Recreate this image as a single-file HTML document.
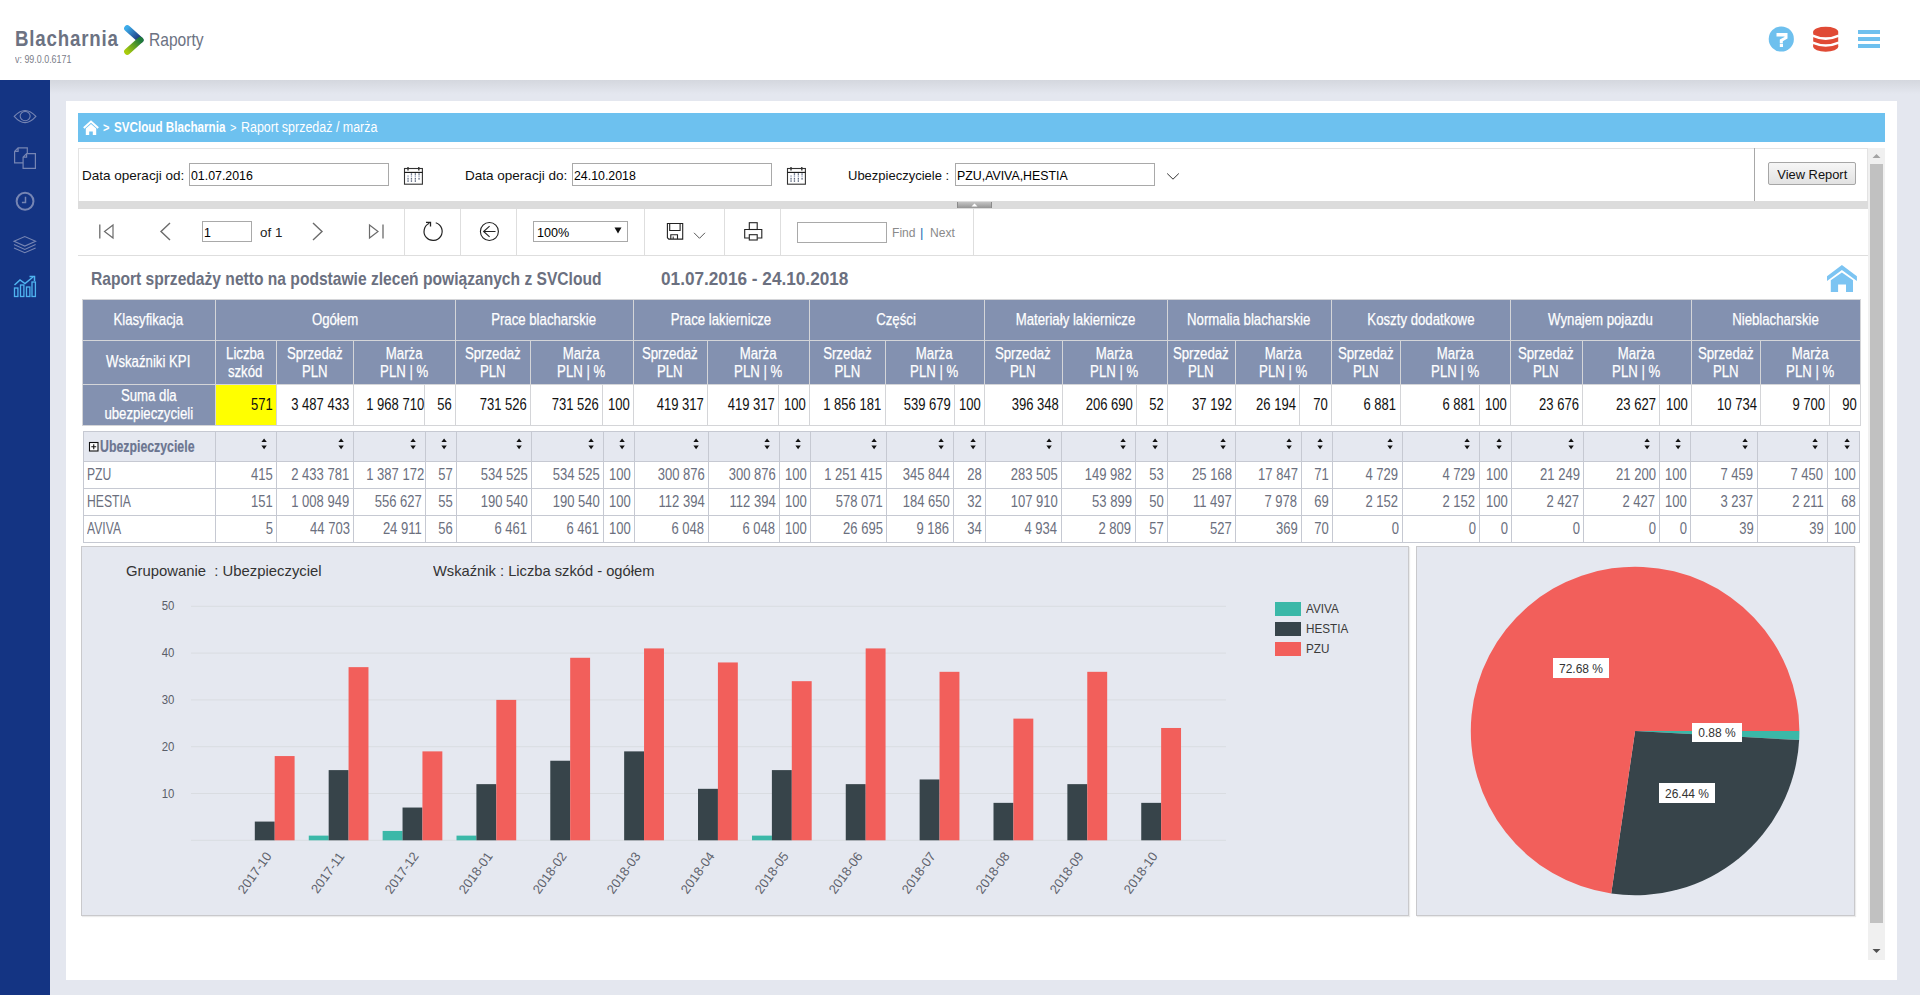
<!DOCTYPE html>
<html><head><meta charset="utf-8"><title>Raport</title>
<style>
html,body{margin:0;padding:0;}
body{width:1920px;height:995px;position:relative;overflow:hidden;background:#e4e7ef;font-family:"Liberation Sans", sans-serif;}
svg{overflow:visible}
</style></head><body>
<div style="position:absolute;left:0px;top:0px;width:1920px;height:80px;background:#fff"></div><div style="position:absolute;left:50px;top:80px;width:1870px;height:14px;background:linear-gradient(#d4d7de,#e4e7ef)"></div><div style="position:absolute;left:15px;top:26px;width:120px;height:26px;line-height:26px;font-size:22.5px;color:#6c7282;text-align:left;font-weight:bold;white-space:nowrap;letter-spacing:1.0px"><span style="display:inline-block;transform:scaleX(0.83);transform-origin:0% 50%;white-space:nowrap">Blacharnia</span></div><svg style="position:absolute;left:120px;top:22px;" width="28" height="36" viewBox="0 0 28 36"><defs><linearGradient id="lg1" gradientUnits="userSpaceOnUse" x1="7" y1="6" x2="20" y2="18"><stop offset="0" stop-color="#3cabe9"/><stop offset="1" stop-color="#1b2b72"/></linearGradient><linearGradient id="lg2" gradientUnits="userSpaceOnUse" x1="20" y1="18" x2="7" y2="30"><stop offset="0" stop-color="#1f7a3a"/><stop offset="1" stop-color="#a9cb0c"/></linearGradient></defs><path d="M7.3 6.4 L20.3 18" fill="none" stroke="url(#lg1)" stroke-width="6.3" stroke-linecap="round"/><path d="M20.3 18 L7.3 29.6" fill="none" stroke="url(#lg2)" stroke-width="6.3" stroke-linecap="round"/></svg><div style="position:absolute;left:149px;top:28px;width:60px;height:24px;line-height:24px;font-size:19px;color:#6c7282;text-align:left;font-weight:normal;white-space:nowrap;"><span style="display:inline-block;transform:scaleX(0.82);transform-origin:0% 50%;white-space:nowrap">Raporty</span></div><div style="position:absolute;left:15px;top:54px;width:70px;height:12px;line-height:12px;font-size:10px;color:#7a7d88;text-align:left;font-weight:normal;white-space:nowrap;"><span style="display:inline-block;transform:scaleX(0.89);transform-origin:0% 50%;white-space:nowrap">v: 99.0.0.6171</span></div><svg style="position:absolute;left:1768px;top:26px;" width="27" height="27" viewBox="0 0 27 27"><circle cx="13.3" cy="13" r="12.6" fill="#6ec0ee"/><path d="M8.5 7.1 L19.5 7.1 L19.5 12.5 L14.8 15.2 L14.8 17.2 L11.8 17.2 L11.8 13.6 L16.5 10.9 L16.5 10.5 L8.5 10.5 Z" fill="#fff"/><rect x="11.8" y="17.8" width="3.2" height="3.2" fill="#fff"/></svg><svg style="position:absolute;left:1812px;top:25px;" width="28" height="28" viewBox="0 0 28 28"><ellipse cx="13.7" cy="6.8" rx="12.5" ry="5.1" fill="#e04a35"/><rect x="1.2" y="6.8" width="25" height="14.8" fill="#e04a35"/><ellipse cx="13.7" cy="21.6" rx="12.5" ry="5.1" fill="#e04a35"/><path d="M0.5 10.6 Q13.7 16.6 26.9 10.6" fill="none" stroke="#fff" stroke-width="2.6"/><path d="M0.5 17.6 Q13.7 23.3 26.9 17.6" fill="none" stroke="#fff" stroke-width="2.4"/></svg><svg style="position:absolute;left:1858px;top:29px;" width="23" height="20" viewBox="0 0 23 20"><rect x="0" y="1" width="22" height="4" fill="#6ec0ee"/><rect x="0" y="8" width="22" height="4" fill="#6ec0ee"/><rect x="0" y="15" width="22" height="4" fill="#6ec0ee"/></svg><div style="position:absolute;left:0px;top:80px;width:50px;height:915px;background:#143483"></div><svg style="position:absolute;left:13px;top:109px;" width="25" height="16" viewBox="0 0 25 16"><path d="M1.2 7.4 Q12 -4.4 22.9 7.4 Q12 19.8 1.2 7.4 Z" fill="none" stroke="#7685b3" stroke-width="1.1"/><ellipse cx="12.15" cy="7.1" rx="5" ry="4.6" fill="none" stroke="#7685b3" stroke-width="1.1"/></svg><svg style="position:absolute;left:13px;top:146px;" width="25" height="25" viewBox="0 0 25 25"><path d="M1.6 5.3 L5.1 1.8 L14.3 1.8 L14.3 7.6 M1.6 5.3 L1.6 16.9 L10.1 16.9 M1.6 5.3 L5.1 5.3 L5.1 1.8" fill="none" stroke="#7685b3" stroke-width="1.2"/><path d="M10.1 11.1 L13.6 7.6 L22.4 7.6 L22.4 22.4 L10.1 22.4 Z M10.1 11.1 L13.6 11.1 L13.6 7.6" fill="none" stroke="#7685b3" stroke-width="1.2"/></svg><svg style="position:absolute;left:15px;top:191px;" width="21" height="21" viewBox="0 0 21 21"><circle cx="10.05" cy="10.25" r="8.4" fill="none" stroke="#7685b3" stroke-width="2"/><path d="M10.5 5.7 L10.5 11.4 L6.9 11.4" fill="none" stroke="#7685b3" stroke-width="1.5"/></svg><svg style="position:absolute;left:13px;top:235px;" width="25" height="20" viewBox="0 0 25 20"><path d="M1 6.3 L11.8 1.5 L22.6 6.3 L11.8 11.1 Z" fill="none" stroke="#7685b3" stroke-width="1.1"/><path d="M1 9.6 L11.8 14.4 L22.6 9.6" fill="none" stroke="#7685b3" stroke-width="1.1"/><path d="M1 12.9 L11.8 17.7 L22.6 12.9" fill="none" stroke="#7685b3" stroke-width="1.1"/></svg><svg style="position:absolute;left:13px;top:275px;" width="24" height="23" viewBox="0 0 24 23"><rect x="1.5" y="13" width="3.4" height="8.5" fill="none" stroke="#4fb4f0" stroke-width="1.3"/><rect x="7.5" y="10" width="3.4" height="11.5" fill="none" stroke="#4fb4f0" stroke-width="1.3"/><rect x="13.5" y="12" width="3.4" height="9.5" fill="none" stroke="#4fb4f0" stroke-width="1.3"/><rect x="19" y="7" width="3.4" height="14.5" fill="none" stroke="#4fb4f0" stroke-width="1.3"/><path d="M1.5 10 L7 5 L12 8.5 L20 2" fill="none" stroke="#4fb4f0" stroke-width="1.5"/><path d="M16.5 1.5 L21.5 1.5 L21.5 6" fill="none" stroke="#4fb4f0" stroke-width="1.5"/></svg><div style="position:absolute;left:66px;top:101px;width:1831px;height:879px;background:#fff"></div><div style="position:absolute;left:78px;top:113px;width:1807px;height:29px;background:#6dc1ef"></div><svg style="position:absolute;left:83px;top:120px;" width="16" height="16" viewBox="0 0 16 16"><path d="M0.8 8 L8 1.5 L15.2 8" fill="none" stroke="#fff" stroke-width="2"/><path d="M2.8 8.5 L8 4 L13.2 8.5 L13.2 15 L9.8 15 L9.8 11.5 L6.2 11.5 L6.2 15 L2.8 15 Z" fill="#fff"/></svg><div style="position:absolute;left:103px;top:113px;width:10px;height:29px;line-height:29px;font-size:13px;color:#fff;text-align:left;font-weight:bold;white-space:nowrap;"><span style="display:inline-block;transform:scaleX(0.85);transform-origin:0% 50%;white-space:nowrap">&gt;</span></div><div style="position:absolute;left:114px;top:113px;width:120px;height:29px;line-height:29px;font-size:14px;color:#fff;text-align:left;font-weight:bold;white-space:nowrap;"><span style="display:inline-block;transform:scaleX(0.833);transform-origin:0% 50%;white-space:nowrap">SVCloud Blacharnia</span></div><div style="position:absolute;left:230px;top:113px;width:10px;height:29px;line-height:29px;font-size:13px;color:#fff;text-align:left;font-weight:normal;white-space:nowrap;"><span style="display:inline-block;transform:scaleX(0.85);transform-origin:0% 50%;white-space:nowrap">&gt;</span></div><div style="position:absolute;left:241px;top:113px;width:150px;height:29px;line-height:29px;font-size:14px;color:#fff;text-align:left;font-weight:normal;white-space:nowrap;"><span style="display:inline-block;transform:scaleX(0.89);transform-origin:0% 50%;white-space:nowrap">Raport sprzedaż / marża</span></div><div style="position:absolute;left:78px;top:148px;width:1790px;height:53px;border:1px solid #e3e3e3;border-bottom:none;box-sizing:border-box;background:#fff"></div><div style="position:absolute;left:1754px;top:148px;width:1px;height:53px;background:#a8a8a8"></div><div style="position:absolute;left:82px;top:164px;width:110px;height:23px;line-height:23px;font-size:13px;color:#111;text-align:left;font-weight:normal;white-space:nowrap;"><span style="display:inline-block;transform:scaleX(1.04);transform-origin:0% 50%;white-space:nowrap">Data operacji od:</span></div><div style="position:absolute;left:189px;top:163px;width:200px;height:23px;border:1px solid #a9a9a9;box-sizing:border-box;background:#fff"></div><div style="position:absolute;left:191px;top:164px;width:196px;height:23px;line-height:23px;font-size:13px;color:#000;text-align:left;font-weight:normal;white-space:nowrap;"><span style="display:inline-block;transform:scaleX(0.95);transform-origin:0% 50%;white-space:nowrap">01.07.2016</span></div><svg style="position:absolute;left:403px;top:166px;" width="21" height="20" viewBox="0 0 21 20"><rect x="1.5" y="2.5" width="17.9" height="15.7" fill="none" stroke="#333" stroke-width="1.1"/><path d="M1.5 6.4 L19.4 6.4" stroke="#111" stroke-width="1.1"/><path d="M5 0.9 L5 4.4 M15.8 0.9 L15.8 4.4" stroke="#333" stroke-width="1.4"/><rect x="7.800000000000001" y="7.4" width="1.3" height="1.3" fill="#3c4a66"/><rect x="11.700000000000001" y="7.4" width="1.3" height="1.3" fill="#3c4a66"/><rect x="15.4" y="7.4" width="1.3" height="1.3" fill="#3c4a66"/><rect x="4.4" y="12.200000000000001" width="1.3" height="1.3" fill="#3c4a66"/><rect x="7.800000000000001" y="12.200000000000001" width="1.3" height="1.3" fill="#3c4a66"/><rect x="11.700000000000001" y="12.200000000000001" width="1.3" height="1.3" fill="#3c4a66"/><rect x="15.4" y="12.200000000000001" width="1.3" height="1.3" fill="#3c4a66"/><rect x="4.4" y="14.4" width="1.3" height="1.3" fill="#3c4a66"/><rect x="7.800000000000001" y="14.4" width="1.3" height="1.3" fill="#3c4a66"/><rect x="11.700000000000001" y="14.4" width="1.3" height="1.3" fill="#3c4a66"/><rect x="4.4" y="9.200000000000001" width="1.3" height="2.2" fill="#a8b0c4"/><rect x="7.800000000000001" y="9.200000000000001" width="1.3" height="2.2" fill="#a8b0c4"/><rect x="11.700000000000001" y="9.200000000000001" width="1.3" height="2.2" fill="#a8b0c4"/><rect x="15.4" y="9.200000000000001" width="1.3" height="2.2" fill="#a8b0c4"/></svg><div style="position:absolute;left:465px;top:164px;width:110px;height:23px;line-height:23px;font-size:13px;color:#111;text-align:left;font-weight:normal;white-space:nowrap;"><span style="display:inline-block;transform:scaleX(1.04);transform-origin:0% 50%;white-space:nowrap">Data operacji do:</span></div><div style="position:absolute;left:572px;top:163px;width:200px;height:23px;border:1px solid #a9a9a9;box-sizing:border-box;background:#fff"></div><div style="position:absolute;left:574px;top:164px;width:196px;height:23px;line-height:23px;font-size:13px;color:#000;text-align:left;font-weight:normal;white-space:nowrap;"><span style="display:inline-block;transform:scaleX(0.95);transform-origin:0% 50%;white-space:nowrap">24.10.2018</span></div><svg style="position:absolute;left:786px;top:166px;" width="21" height="20" viewBox="0 0 21 20"><rect x="1.5" y="2.5" width="17.9" height="15.7" fill="none" stroke="#333" stroke-width="1.1"/><path d="M1.5 6.4 L19.4 6.4" stroke="#111" stroke-width="1.1"/><path d="M5 0.9 L5 4.4 M15.8 0.9 L15.8 4.4" stroke="#333" stroke-width="1.4"/><rect x="7.800000000000001" y="7.4" width="1.3" height="1.3" fill="#3c4a66"/><rect x="11.700000000000001" y="7.4" width="1.3" height="1.3" fill="#3c4a66"/><rect x="15.4" y="7.4" width="1.3" height="1.3" fill="#3c4a66"/><rect x="4.4" y="12.200000000000001" width="1.3" height="1.3" fill="#3c4a66"/><rect x="7.800000000000001" y="12.200000000000001" width="1.3" height="1.3" fill="#3c4a66"/><rect x="11.700000000000001" y="12.200000000000001" width="1.3" height="1.3" fill="#3c4a66"/><rect x="15.4" y="12.200000000000001" width="1.3" height="1.3" fill="#3c4a66"/><rect x="4.4" y="14.4" width="1.3" height="1.3" fill="#3c4a66"/><rect x="7.800000000000001" y="14.4" width="1.3" height="1.3" fill="#3c4a66"/><rect x="11.700000000000001" y="14.4" width="1.3" height="1.3" fill="#3c4a66"/><rect x="4.4" y="9.200000000000001" width="1.3" height="2.2" fill="#a8b0c4"/><rect x="7.800000000000001" y="9.200000000000001" width="1.3" height="2.2" fill="#a8b0c4"/><rect x="11.700000000000001" y="9.200000000000001" width="1.3" height="2.2" fill="#a8b0c4"/><rect x="15.4" y="9.200000000000001" width="1.3" height="2.2" fill="#a8b0c4"/></svg><div style="position:absolute;left:848px;top:164px;width:110px;height:23px;line-height:23px;font-size:13px;color:#111;text-align:left;font-weight:normal;white-space:nowrap;">Ubezpieczyciele :</div><div style="position:absolute;left:955px;top:163px;width:200px;height:23px;border:1px solid #a9a9a9;box-sizing:border-box;background:#fff"></div><div style="position:absolute;left:957px;top:164px;width:196px;height:23px;line-height:23px;font-size:13px;color:#000;text-align:left;font-weight:normal;white-space:nowrap;"><span style="display:inline-block;transform:scaleX(0.95);transform-origin:0% 50%;white-space:nowrap">PZU,AVIVA,HESTIA</span></div><svg style="position:absolute;left:1166px;top:171px;" width="14" height="10" viewBox="0 0 14 10"><path d="M1.2 2.5 L7 8.2 L12.8 2.5" fill="none" stroke="#333" stroke-width="1"/></svg><div style="position:absolute;left:1768px;top:162px;width:88px;height:23px;border:1px solid #a6a6a6;box-sizing:border-box;background:linear-gradient(#f6f6f6,#e2e2e2);border-radius:2px"></div><div style="position:absolute;left:1768px;top:163px;width:88px;height:23px;line-height:23px;font-size:13px;color:#111;text-align:center;font-weight:normal;white-space:nowrap;"><span style="display:inline-block;transform:scaleX(0.99);transform-origin:50% 50%;white-space:nowrap">View Report</span></div><div style="position:absolute;left:78px;top:201px;width:1790px;height:8px;background:#dcdcdc"></div><div style="position:absolute;left:957px;top:202px;width:35px;height:6px;background:linear-gradient(#c4c4c4,#959595);border-left:1px solid #8a8a8a;border-right:1px solid #8a8a8a;box-sizing:border-box"></div><svg style="position:absolute;left:971px;top:202.5px;" width="7" height="4" viewBox="0 0 7 4"><path d="M0.5 3.5 L3.5 0.5 L6.5 3.5 Z" fill="#fff"/></svg><div style="position:absolute;left:78px;top:255px;width:1790px;height:1px;background:#dedede"></div><div style="position:absolute;left:404px;top:209px;width:1px;height:46px;background:#dedede"></div><div style="position:absolute;left:460px;top:209px;width:1px;height:46px;background:#dedede"></div><div style="position:absolute;left:516px;top:209px;width:1px;height:46px;background:#dedede"></div><div style="position:absolute;left:644px;top:209px;width:1px;height:46px;background:#dedede"></div><div style="position:absolute;left:724px;top:209px;width:1px;height:46px;background:#dedede"></div><div style="position:absolute;left:780px;top:209px;width:1px;height:46px;background:#dedede"></div><div style="position:absolute;left:973px;top:209px;width:1px;height:46px;background:#dedede"></div><svg style="position:absolute;left:98px;top:223px;" width="18" height="18" viewBox="0 0 18 18"><path d="M1.8 1.5 L1.8 15.5" stroke="#6b6b6b" stroke-width="1.3"/><path d="M15 2 L6.5 8.5 L15 15 Z" fill="none" stroke="#6b6b6b" stroke-width="1.2"/></svg><svg style="position:absolute;left:159px;top:222px;" width="14" height="20" viewBox="0 0 14 20"><path d="M11 1 L2 9.5 L11 18" fill="none" stroke="#6b6b6b" stroke-width="1.4"/></svg><div style="position:absolute;left:202px;top:221px;width:50px;height:21px;border:1px solid #a9a9a9;box-sizing:border-box;background:#fff"></div><div style="position:absolute;left:204px;top:222px;width:46px;height:21px;line-height:21px;font-size:13px;color:#000;text-align:left;font-weight:normal;white-space:nowrap;"><span style="display:inline-block;transform:scaleX(0.95);transform-origin:0% 50%;white-space:nowrap">1</span></div><div style="position:absolute;left:260px;top:222px;width:30px;height:21px;line-height:21px;font-size:13px;color:#222;text-align:left;font-weight:normal;white-space:nowrap;"><span style="display:inline-block;transform:scaleX(1.03);transform-origin:0% 50%;white-space:nowrap">of 1</span></div><svg style="position:absolute;left:311px;top:222px;" width="14" height="20" viewBox="0 0 14 20"><path d="M2 1 L11 9.5 L2 18" fill="none" stroke="#6b6b6b" stroke-width="1.4"/></svg><svg style="position:absolute;left:367px;top:223px;" width="18" height="18" viewBox="0 0 18 18"><path d="M16 1.5 L16 15.5" stroke="#6b6b6b" stroke-width="1.3"/><path d="M2.5 2 L11 8.5 L2.5 15 Z" fill="none" stroke="#6b6b6b" stroke-width="1.2"/></svg><svg style="position:absolute;left:422px;top:220px;" width="23" height="23" viewBox="0 0 23 23"><path d="M13.75 2.75 A9.05 9.05 0 1 1 7.28 3.2" fill="none" stroke="#222" stroke-width="1.2"/><path d="M4 2.3 L8.5 2.3 L8.5 6.5" fill="none" stroke="#222" stroke-width="1.3"/></svg><svg style="position:absolute;left:479px;top:221px;" width="22" height="22" viewBox="0 0 22 22"><circle cx="10.4" cy="10.45" r="9.0" fill="none" stroke="#222" stroke-width="1.1"/><path d="M10.6 5.1 L4.6 10.5 L10.6 15.9 M4.6 10.5 L16.5 10.5" fill="none" stroke="#222" stroke-width="1.1"/></svg><div style="position:absolute;left:533px;top:221px;width:95px;height:21px;border:1px solid #a9a9a9;box-sizing:border-box;background:#fff"></div><div style="position:absolute;left:537px;top:222px;width:60px;height:21px;line-height:21px;font-size:13px;color:#000;text-align:left;font-weight:normal;white-space:nowrap;"><span style="display:inline-block;transform:scaleX(0.97);transform-origin:0% 50%;white-space:nowrap">100%</span></div><svg style="position:absolute;left:614px;top:227px;" width="8" height="7" viewBox="0 0 8 7"><path d="M0.5 0.5 L7.5 0.5 L4 6.5 Z" fill="#111"/></svg><svg style="position:absolute;left:665px;top:222px;" width="20" height="19" viewBox="0 0 20 19"><path d="M2.4 1.5 L17.7 1.5 L17.7 17.1 L3.8 17.1 L2.4 15.7 Z" fill="none" stroke="#222" stroke-width="1.1"/><path d="M4.7 1.5 L4.7 8.5 L15.1 8.5 L15.1 1.5" fill="none" stroke="#222" stroke-width="1.1"/><path d="M5.8 17.1 L5.8 12.7 L12.5 12.7 L12.5 17.1" fill="none" stroke="#222" stroke-width="1.1"/><path d="M8.2 14.5 L8.2 17" stroke="#222" stroke-width="1"/></svg><svg style="position:absolute;left:693px;top:231px;" width="13" height="9" viewBox="0 0 13 9"><path d="M1 1.8 L6.5 7.3 L12 1.8" fill="none" stroke="#444" stroke-width="0.9"/></svg><svg style="position:absolute;left:743px;top:221px;" width="21" height="21" viewBox="0 0 21 21"><rect x="6.3" y="1.7" width="7.9" height="6.8" fill="none" stroke="#222" stroke-width="1.1"/><path d="M6.3 17 L1.7 17 L1.7 8.5 L18.8 8.5 L18.8 17 L14.2 17" fill="none" stroke="#222" stroke-width="1.1"/><rect x="6.3" y="13.7" width="7.9" height="5.3" fill="#fff" stroke="#222" stroke-width="1.1"/></svg><div style="position:absolute;left:797px;top:222px;width:90px;height:21px;border:1px solid #a9a9a9;box-sizing:border-box;background:#fff"></div><div style="position:absolute;left:892px;top:222px;width:30px;height:21px;line-height:21px;font-size:13px;color:#8a8a8a;text-align:left;font-weight:normal;white-space:nowrap;"><span style="display:inline-block;transform:scaleX(0.93);transform-origin:0% 50%;white-space:nowrap">Find</span></div><div style="position:absolute;left:920px;top:222px;width:6px;height:21px;line-height:21px;font-size:13px;color:#1a6fb5;text-align:left;font-weight:normal;white-space:nowrap;">|</div><div style="position:absolute;left:930px;top:222px;width:30px;height:21px;line-height:21px;font-size:13px;color:#8a8a8a;text-align:left;font-weight:normal;white-space:nowrap;"><span style="display:inline-block;transform:scaleX(0.93);transform-origin:0% 50%;white-space:nowrap">Next</span></div><div style="position:absolute;left:1868px;top:148px;width:17px;height:812px;background:#f0f0f0"></div><div style="position:absolute;left:1870px;top:164px;width:13px;height:759px;background:#c1c1c1"></div><svg style="position:absolute;left:1872px;top:153px;" width="9" height="6" viewBox="0 0 9 6"><path d="M0.5 5 L4.5 1 L8.5 5 Z" fill="#a3a3a3"/></svg><svg style="position:absolute;left:1872px;top:948px;" width="9" height="6" viewBox="0 0 9 6"><path d="M0.5 1 L4.5 5 L8.5 1 Z" fill="#505050"/></svg><div style="position:absolute;left:91px;top:267px;width:520px;height:24px;line-height:24px;font-size:19px;color:#6b7080;text-align:left;font-weight:bold;white-space:nowrap;"><span style="display:inline-block;transform:scaleX(0.821);transform-origin:0% 50%;white-space:nowrap">Raport sprzedaży netto na podstawie zleceń powiązanych z SVCloud</span></div><div style="position:absolute;left:661px;top:267px;width:200px;height:24px;line-height:24px;font-size:19px;color:#6b7080;text-align:left;font-weight:bold;white-space:nowrap;"><span style="display:inline-block;transform:scaleX(0.905);transform-origin:0% 50%;white-space:nowrap">01.07.2016 - 24.10.2018</span></div><svg style="position:absolute;left:1825px;top:263px;" width="34" height="31" viewBox="0 0 34 31"><path d="M2 13.3 L16.9 2 L31.9 13.3 L31.9 18 L16.9 6.9 L2 18 Z" fill="#7cc4f2"/><path d="M5.8 17.3 L16.9 9.4 L28 17.3 L28 28.9 L21 28.9 L21 21.6 L13.1 21.6 L13.1 28.9 L5.8 28.9 Z" fill="#7cc4f2"/></svg><div style="position:absolute;left:82px;top:299px;width:1779px;height:85px;background:#8391b0"></div><div style="position:absolute;left:82px;top:384px;width:133px;height:41px;background:#8391b0"></div><div style="position:absolute;left:215px;top:384px;width:61px;height:41px;background:#ffff00"></div><div style="position:absolute;left:276px;top:384px;width:1584px;height:41px;background:#fff"></div><div style="position:absolute;left:82px;top:299px;width:1779px;height:127px;border:1px solid #d4d5d8;box-sizing:border-box"></div><div style="position:absolute;left:82px;top:340px;width:1778px;height:1px;background:#d4d5d8"></div><div style="position:absolute;left:82px;top:384px;width:1778px;height:1px;background:#d4d5d8"></div><div style="position:absolute;left:215px;top:299px;width:1px;height:126px;background:#d4d5d8"></div><div style="position:absolute;left:455px;top:299px;width:1px;height:126px;background:#d4d5d8"></div><div style="position:absolute;left:633px;top:299px;width:1px;height:126px;background:#d4d5d8"></div><div style="position:absolute;left:809px;top:299px;width:1px;height:126px;background:#d4d5d8"></div><div style="position:absolute;left:984px;top:299px;width:1px;height:126px;background:#d4d5d8"></div><div style="position:absolute;left:1167px;top:299px;width:1px;height:126px;background:#d4d5d8"></div><div style="position:absolute;left:1331px;top:299px;width:1px;height:126px;background:#d4d5d8"></div><div style="position:absolute;left:1510px;top:299px;width:1px;height:126px;background:#d4d5d8"></div><div style="position:absolute;left:1691px;top:299px;width:1px;height:126px;background:#d4d5d8"></div><div style="position:absolute;left:276px;top:340px;width:1px;height:85px;background:#d4d5d8"></div><div style="position:absolute;left:353px;top:340px;width:1px;height:85px;background:#d4d5d8"></div><div style="position:absolute;left:530px;top:340px;width:1px;height:85px;background:#d4d5d8"></div><div style="position:absolute;left:707px;top:340px;width:1px;height:85px;background:#d4d5d8"></div><div style="position:absolute;left:885px;top:340px;width:1px;height:85px;background:#d4d5d8"></div><div style="position:absolute;left:1062px;top:340px;width:1px;height:85px;background:#d4d5d8"></div><div style="position:absolute;left:1235px;top:340px;width:1px;height:85px;background:#d4d5d8"></div><div style="position:absolute;left:1400px;top:340px;width:1px;height:85px;background:#d4d5d8"></div><div style="position:absolute;left:1582px;top:340px;width:1px;height:85px;background:#d4d5d8"></div><div style="position:absolute;left:1760px;top:340px;width:1px;height:85px;background:#d4d5d8"></div><div style="position:absolute;left:424px;top:384px;width:1px;height:41px;background:#d4d5d8"></div><div style="position:absolute;left:602px;top:384px;width:1px;height:41px;background:#d4d5d8"></div><div style="position:absolute;left:778px;top:384px;width:1px;height:41px;background:#d4d5d8"></div><div style="position:absolute;left:954px;top:384px;width:1px;height:41px;background:#d4d5d8"></div><div style="position:absolute;left:1136px;top:384px;width:1px;height:41px;background:#d4d5d8"></div><div style="position:absolute;left:1299px;top:384px;width:1px;height:41px;background:#d4d5d8"></div><div style="position:absolute;left:1479px;top:384px;width:1px;height:41px;background:#d4d5d8"></div><div style="position:absolute;left:1659px;top:384px;width:1px;height:41px;background:#d4d5d8"></div><div style="position:absolute;left:1829px;top:384px;width:1px;height:41px;background:#d4d5d8"></div><div style="position:absolute;left:82px;top:299px;width:133px;height:41px;line-height:41px;font-size:16px;color:#fff;text-align:center;font-weight:normal;white-space:nowrap;-webkit-text-stroke:0.25px #fff"><span style="display:inline-block;transform:scaleX(0.825);transform-origin:50% 50%;white-space:nowrap">Klasyfikacja</span></div><div style="position:absolute;left:215px;top:299px;width:240px;height:41px;line-height:41px;font-size:16px;color:#fff;text-align:center;font-weight:normal;white-space:nowrap;-webkit-text-stroke:0.25px #fff"><span style="display:inline-block;transform:scaleX(0.825);transform-origin:50% 50%;white-space:nowrap">Ogółem</span></div><div style="position:absolute;left:455px;top:299px;width:178px;height:41px;line-height:41px;font-size:16px;color:#fff;text-align:center;font-weight:normal;white-space:nowrap;-webkit-text-stroke:0.25px #fff"><span style="display:inline-block;transform:scaleX(0.825);transform-origin:50% 50%;white-space:nowrap">Prace blacharskie</span></div><div style="position:absolute;left:633px;top:299px;width:176px;height:41px;line-height:41px;font-size:16px;color:#fff;text-align:center;font-weight:normal;white-space:nowrap;-webkit-text-stroke:0.25px #fff"><span style="display:inline-block;transform:scaleX(0.825);transform-origin:50% 50%;white-space:nowrap">Prace lakiernicze</span></div><div style="position:absolute;left:809px;top:299px;width:175px;height:41px;line-height:41px;font-size:16px;color:#fff;text-align:center;font-weight:normal;white-space:nowrap;-webkit-text-stroke:0.25px #fff"><span style="display:inline-block;transform:scaleX(0.825);transform-origin:50% 50%;white-space:nowrap">Części</span></div><div style="position:absolute;left:984px;top:299px;width:183px;height:41px;line-height:41px;font-size:16px;color:#fff;text-align:center;font-weight:normal;white-space:nowrap;-webkit-text-stroke:0.25px #fff"><span style="display:inline-block;transform:scaleX(0.825);transform-origin:50% 50%;white-space:nowrap">Materiały lakiernicze</span></div><div style="position:absolute;left:1167px;top:299px;width:164px;height:41px;line-height:41px;font-size:16px;color:#fff;text-align:center;font-weight:normal;white-space:nowrap;-webkit-text-stroke:0.25px #fff"><span style="display:inline-block;transform:scaleX(0.825);transform-origin:50% 50%;white-space:nowrap">Normalia blacharskie</span></div><div style="position:absolute;left:1331px;top:299px;width:179px;height:41px;line-height:41px;font-size:16px;color:#fff;text-align:center;font-weight:normal;white-space:nowrap;-webkit-text-stroke:0.25px #fff"><span style="display:inline-block;transform:scaleX(0.825);transform-origin:50% 50%;white-space:nowrap">Koszty dodatkowe</span></div><div style="position:absolute;left:1510px;top:299px;width:181px;height:41px;line-height:41px;font-size:16px;color:#fff;text-align:center;font-weight:normal;white-space:nowrap;-webkit-text-stroke:0.25px #fff"><span style="display:inline-block;transform:scaleX(0.825);transform-origin:50% 50%;white-space:nowrap">Wynajem pojazdu</span></div><div style="position:absolute;left:1691px;top:299px;width:169px;height:41px;line-height:41px;font-size:16px;color:#fff;text-align:center;font-weight:normal;white-space:nowrap;-webkit-text-stroke:0.25px #fff"><span style="display:inline-block;transform:scaleX(0.825);transform-origin:50% 50%;white-space:nowrap">Nieblacharskie</span></div><div style="position:absolute;left:82px;top:340px;width:133px;height:44px;line-height:44px;font-size:16px;color:#fff;text-align:center;font-weight:normal;white-space:nowrap;-webkit-text-stroke:0.25px #fff"><span style="display:inline-block;transform:scaleX(0.825);transform-origin:50% 50%;white-space:nowrap">Wskaźniki KPI</span></div><div style="position:absolute;left:215px;top:344.5px;width:61px;height:36px;line-height:18px;-webkit-text-stroke:0.25px #fff;font-size:16px;color:#fff;text-align:center;white-space:nowrap"><span style="display:inline-block;transform:scaleX(0.825);transform-origin:50% 50%">Liczba<br>szkód</span></div><div style="position:absolute;left:276px;top:344.5px;width:77px;height:36px;line-height:18px;-webkit-text-stroke:0.25px #fff;font-size:16px;color:#fff;text-align:center;white-space:nowrap"><span style="display:inline-block;transform:scaleX(0.825);transform-origin:50% 50%">Sprzedaż<br>PLN</span></div><div style="position:absolute;left:353px;top:344.5px;width:102px;height:36px;line-height:18px;-webkit-text-stroke:0.25px #fff;font-size:16px;color:#fff;text-align:center;white-space:nowrap"><span style="display:inline-block;transform:scaleX(0.825);transform-origin:50% 50%">Marża<br>PLN | %</span></div><div style="position:absolute;left:455px;top:344.5px;width:75px;height:36px;line-height:18px;-webkit-text-stroke:0.25px #fff;font-size:16px;color:#fff;text-align:center;white-space:nowrap"><span style="display:inline-block;transform:scaleX(0.825);transform-origin:50% 50%">Sprzedaż<br>PLN</span></div><div style="position:absolute;left:530px;top:344.5px;width:103px;height:36px;line-height:18px;-webkit-text-stroke:0.25px #fff;font-size:16px;color:#fff;text-align:center;white-space:nowrap"><span style="display:inline-block;transform:scaleX(0.825);transform-origin:50% 50%">Marża<br>PLN | %</span></div><div style="position:absolute;left:633px;top:344.5px;width:74px;height:36px;line-height:18px;-webkit-text-stroke:0.25px #fff;font-size:16px;color:#fff;text-align:center;white-space:nowrap"><span style="display:inline-block;transform:scaleX(0.825);transform-origin:50% 50%">Sprzedaż<br>PLN</span></div><div style="position:absolute;left:707px;top:344.5px;width:102px;height:36px;line-height:18px;-webkit-text-stroke:0.25px #fff;font-size:16px;color:#fff;text-align:center;white-space:nowrap"><span style="display:inline-block;transform:scaleX(0.825);transform-origin:50% 50%">Marża<br>PLN | %</span></div><div style="position:absolute;left:809px;top:344.5px;width:76px;height:36px;line-height:18px;-webkit-text-stroke:0.25px #fff;font-size:16px;color:#fff;text-align:center;white-space:nowrap"><span style="display:inline-block;transform:scaleX(0.825);transform-origin:50% 50%">Srzedaż<br>PLN</span></div><div style="position:absolute;left:885px;top:344.5px;width:99px;height:36px;line-height:18px;-webkit-text-stroke:0.25px #fff;font-size:16px;color:#fff;text-align:center;white-space:nowrap"><span style="display:inline-block;transform:scaleX(0.825);transform-origin:50% 50%">Marża<br>PLN | %</span></div><div style="position:absolute;left:984px;top:344.5px;width:78px;height:36px;line-height:18px;-webkit-text-stroke:0.25px #fff;font-size:16px;color:#fff;text-align:center;white-space:nowrap"><span style="display:inline-block;transform:scaleX(0.825);transform-origin:50% 50%">Sprzedaż<br>PLN</span></div><div style="position:absolute;left:1062px;top:344.5px;width:105px;height:36px;line-height:18px;-webkit-text-stroke:0.25px #fff;font-size:16px;color:#fff;text-align:center;white-space:nowrap"><span style="display:inline-block;transform:scaleX(0.825);transform-origin:50% 50%">Marża<br>PLN | %</span></div><div style="position:absolute;left:1167px;top:344.5px;width:68px;height:36px;line-height:18px;-webkit-text-stroke:0.25px #fff;font-size:16px;color:#fff;text-align:center;white-space:nowrap"><span style="display:inline-block;transform:scaleX(0.825);transform-origin:50% 50%">Sprzedaż<br>PLN</span></div><div style="position:absolute;left:1235px;top:344.5px;width:96px;height:36px;line-height:18px;-webkit-text-stroke:0.25px #fff;font-size:16px;color:#fff;text-align:center;white-space:nowrap"><span style="display:inline-block;transform:scaleX(0.825);transform-origin:50% 50%">Marża<br>PLN | %</span></div><div style="position:absolute;left:1331px;top:344.5px;width:69px;height:36px;line-height:18px;-webkit-text-stroke:0.25px #fff;font-size:16px;color:#fff;text-align:center;white-space:nowrap"><span style="display:inline-block;transform:scaleX(0.825);transform-origin:50% 50%">Sprzedaż<br>PLN</span></div><div style="position:absolute;left:1400px;top:344.5px;width:110px;height:36px;line-height:18px;-webkit-text-stroke:0.25px #fff;font-size:16px;color:#fff;text-align:center;white-space:nowrap"><span style="display:inline-block;transform:scaleX(0.825);transform-origin:50% 50%">Marża<br>PLN | %</span></div><div style="position:absolute;left:1510px;top:344.5px;width:72px;height:36px;line-height:18px;-webkit-text-stroke:0.25px #fff;font-size:16px;color:#fff;text-align:center;white-space:nowrap"><span style="display:inline-block;transform:scaleX(0.825);transform-origin:50% 50%">Sprzedaż<br>PLN</span></div><div style="position:absolute;left:1582px;top:344.5px;width:109px;height:36px;line-height:18px;-webkit-text-stroke:0.25px #fff;font-size:16px;color:#fff;text-align:center;white-space:nowrap"><span style="display:inline-block;transform:scaleX(0.825);transform-origin:50% 50%">Marża<br>PLN | %</span></div><div style="position:absolute;left:1691px;top:344.5px;width:69px;height:36px;line-height:18px;-webkit-text-stroke:0.25px #fff;font-size:16px;color:#fff;text-align:center;white-space:nowrap"><span style="display:inline-block;transform:scaleX(0.825);transform-origin:50% 50%">Sprzedaż<br>PLN</span></div><div style="position:absolute;left:1760px;top:344.5px;width:100px;height:36px;line-height:18px;-webkit-text-stroke:0.25px #fff;font-size:16px;color:#fff;text-align:center;white-space:nowrap"><span style="display:inline-block;transform:scaleX(0.825);transform-origin:50% 50%">Marża<br>PLN | %</span></div><div style="position:absolute;left:82px;top:387px;width:133px;height:36px;line-height:18px;-webkit-text-stroke:0.25px #fff;font-size:16px;color:#fff;text-align:center;white-space:nowrap"><span style="display:inline-block;transform:scaleX(0.825);transform-origin:50% 50%">Suma dla<br>ubezpieczycieli</span></div><div style="position:absolute;left:215px;top:384px;width:57.5px;height:42px;line-height:42px;font-size:16px;color:#111;text-align:right;font-weight:normal;white-space:nowrap;"><span style="display:inline-block;transform:scaleX(0.814);transform-origin:100% 50%;white-space:nowrap">571</span></div><div style="position:absolute;left:276px;top:384px;width:73.5px;height:42px;line-height:42px;font-size:16px;color:#111;text-align:right;font-weight:normal;white-space:nowrap;"><span style="display:inline-block;transform:scaleX(0.814);transform-origin:100% 50%;white-space:nowrap">3 487 433</span></div><div style="position:absolute;left:353px;top:384px;width:67.5px;height:42px;line-height:42px;font-size:16px;color:#111;text-align:right;font-weight:normal;white-space:nowrap;"><span style="display:inline-block;transform:scaleX(0.814);transform-origin:100% 50%;white-space:nowrap">1 968 710</span></div><div style="position:absolute;left:424px;top:384px;width:27.5px;height:42px;line-height:42px;font-size:16px;color:#111;text-align:right;font-weight:normal;white-space:nowrap;"><span style="display:inline-block;transform:scaleX(0.814);transform-origin:100% 50%;white-space:nowrap">56</span></div><div style="position:absolute;left:455px;top:384px;width:71.5px;height:42px;line-height:42px;font-size:16px;color:#111;text-align:right;font-weight:normal;white-space:nowrap;"><span style="display:inline-block;transform:scaleX(0.814);transform-origin:100% 50%;white-space:nowrap">731 526</span></div><div style="position:absolute;left:530px;top:384px;width:68.5px;height:42px;line-height:42px;font-size:16px;color:#111;text-align:right;font-weight:normal;white-space:nowrap;"><span style="display:inline-block;transform:scaleX(0.814);transform-origin:100% 50%;white-space:nowrap">731 526</span></div><div style="position:absolute;left:602px;top:384px;width:27.5px;height:42px;line-height:42px;font-size:16px;color:#111;text-align:right;font-weight:normal;white-space:nowrap;"><span style="display:inline-block;transform:scaleX(0.814);transform-origin:100% 50%;white-space:nowrap">100</span></div><div style="position:absolute;left:633px;top:384px;width:70.5px;height:42px;line-height:42px;font-size:16px;color:#111;text-align:right;font-weight:normal;white-space:nowrap;"><span style="display:inline-block;transform:scaleX(0.814);transform-origin:100% 50%;white-space:nowrap">419 317</span></div><div style="position:absolute;left:707px;top:384px;width:67.5px;height:42px;line-height:42px;font-size:16px;color:#111;text-align:right;font-weight:normal;white-space:nowrap;"><span style="display:inline-block;transform:scaleX(0.814);transform-origin:100% 50%;white-space:nowrap">419 317</span></div><div style="position:absolute;left:778px;top:384px;width:27.5px;height:42px;line-height:42px;font-size:16px;color:#111;text-align:right;font-weight:normal;white-space:nowrap;"><span style="display:inline-block;transform:scaleX(0.814);transform-origin:100% 50%;white-space:nowrap">100</span></div><div style="position:absolute;left:809px;top:384px;width:72.5px;height:42px;line-height:42px;font-size:16px;color:#111;text-align:right;font-weight:normal;white-space:nowrap;"><span style="display:inline-block;transform:scaleX(0.814);transform-origin:100% 50%;white-space:nowrap">1 856 181</span></div><div style="position:absolute;left:885px;top:384px;width:65.5px;height:42px;line-height:42px;font-size:16px;color:#111;text-align:right;font-weight:normal;white-space:nowrap;"><span style="display:inline-block;transform:scaleX(0.814);transform-origin:100% 50%;white-space:nowrap">539 679</span></div><div style="position:absolute;left:954px;top:384px;width:26.5px;height:42px;line-height:42px;font-size:16px;color:#111;text-align:right;font-weight:normal;white-space:nowrap;"><span style="display:inline-block;transform:scaleX(0.814);transform-origin:100% 50%;white-space:nowrap">100</span></div><div style="position:absolute;left:984px;top:384px;width:74.5px;height:42px;line-height:42px;font-size:16px;color:#111;text-align:right;font-weight:normal;white-space:nowrap;"><span style="display:inline-block;transform:scaleX(0.814);transform-origin:100% 50%;white-space:nowrap">396 348</span></div><div style="position:absolute;left:1062px;top:384px;width:70.5px;height:42px;line-height:42px;font-size:16px;color:#111;text-align:right;font-weight:normal;white-space:nowrap;"><span style="display:inline-block;transform:scaleX(0.814);transform-origin:100% 50%;white-space:nowrap">206 690</span></div><div style="position:absolute;left:1136px;top:384px;width:27.5px;height:42px;line-height:42px;font-size:16px;color:#111;text-align:right;font-weight:normal;white-space:nowrap;"><span style="display:inline-block;transform:scaleX(0.814);transform-origin:100% 50%;white-space:nowrap">52</span></div><div style="position:absolute;left:1167px;top:384px;width:64.5px;height:42px;line-height:42px;font-size:16px;color:#111;text-align:right;font-weight:normal;white-space:nowrap;"><span style="display:inline-block;transform:scaleX(0.814);transform-origin:100% 50%;white-space:nowrap">37 192</span></div><div style="position:absolute;left:1235px;top:384px;width:60.5px;height:42px;line-height:42px;font-size:16px;color:#111;text-align:right;font-weight:normal;white-space:nowrap;"><span style="display:inline-block;transform:scaleX(0.814);transform-origin:100% 50%;white-space:nowrap">26 194</span></div><div style="position:absolute;left:1299px;top:384px;width:28.5px;height:42px;line-height:42px;font-size:16px;color:#111;text-align:right;font-weight:normal;white-space:nowrap;"><span style="display:inline-block;transform:scaleX(0.814);transform-origin:100% 50%;white-space:nowrap">70</span></div><div style="position:absolute;left:1331px;top:384px;width:65.5px;height:42px;line-height:42px;font-size:16px;color:#111;text-align:right;font-weight:normal;white-space:nowrap;"><span style="display:inline-block;transform:scaleX(0.814);transform-origin:100% 50%;white-space:nowrap">6 881</span></div><div style="position:absolute;left:1400px;top:384px;width:75.5px;height:42px;line-height:42px;font-size:16px;color:#111;text-align:right;font-weight:normal;white-space:nowrap;"><span style="display:inline-block;transform:scaleX(0.814);transform-origin:100% 50%;white-space:nowrap">6 881</span></div><div style="position:absolute;left:1479px;top:384px;width:27.5px;height:42px;line-height:42px;font-size:16px;color:#111;text-align:right;font-weight:normal;white-space:nowrap;"><span style="display:inline-block;transform:scaleX(0.814);transform-origin:100% 50%;white-space:nowrap">100</span></div><div style="position:absolute;left:1510px;top:384px;width:68.5px;height:42px;line-height:42px;font-size:16px;color:#111;text-align:right;font-weight:normal;white-space:nowrap;"><span style="display:inline-block;transform:scaleX(0.814);transform-origin:100% 50%;white-space:nowrap">23 676</span></div><div style="position:absolute;left:1582px;top:384px;width:73.5px;height:42px;line-height:42px;font-size:16px;color:#111;text-align:right;font-weight:normal;white-space:nowrap;"><span style="display:inline-block;transform:scaleX(0.814);transform-origin:100% 50%;white-space:nowrap">23 627</span></div><div style="position:absolute;left:1659px;top:384px;width:28.5px;height:42px;line-height:42px;font-size:16px;color:#111;text-align:right;font-weight:normal;white-space:nowrap;"><span style="display:inline-block;transform:scaleX(0.814);transform-origin:100% 50%;white-space:nowrap">100</span></div><div style="position:absolute;left:1691px;top:384px;width:65.5px;height:42px;line-height:42px;font-size:16px;color:#111;text-align:right;font-weight:normal;white-space:nowrap;"><span style="display:inline-block;transform:scaleX(0.814);transform-origin:100% 50%;white-space:nowrap">10 734</span></div><div style="position:absolute;left:1760px;top:384px;width:65.5px;height:42px;line-height:42px;font-size:16px;color:#111;text-align:right;font-weight:normal;white-space:nowrap;"><span style="display:inline-block;transform:scaleX(0.814);transform-origin:100% 50%;white-space:nowrap">9 700</span></div><div style="position:absolute;left:1829px;top:384px;width:27.5px;height:42px;line-height:42px;font-size:16px;color:#111;text-align:right;font-weight:normal;white-space:nowrap;"><span style="display:inline-block;transform:scaleX(0.814);transform-origin:100% 50%;white-space:nowrap">90</span></div><div style="position:absolute;left:83px;top:431px;width:1777px;height:30px;background:#e5e8f0"></div><div style="position:absolute;left:83px;top:461px;width:1777px;height:81px;background:#fff"></div><div style="position:absolute;left:83px;top:431px;width:1777px;height:112px;border:1px solid #c6c9d2;box-sizing:border-box"></div><div style="position:absolute;left:83px;top:461px;width:1776px;height:1px;background:#c6c9d2"></div><div style="position:absolute;left:83px;top:488px;width:1776px;height:1px;background:#c6c9d2"></div><div style="position:absolute;left:83px;top:515px;width:1776px;height:1px;background:#c6c9d2"></div><div style="position:absolute;left:215px;top:431px;width:1px;height:111px;background:#c6c9d2"></div><div style="position:absolute;left:276px;top:431px;width:1px;height:111px;background:#c6c9d2"></div><div style="position:absolute;left:353px;top:431px;width:1px;height:111px;background:#c6c9d2"></div><div style="position:absolute;left:425px;top:431px;width:1px;height:111px;background:#c6c9d2"></div><div style="position:absolute;left:456px;top:431px;width:1px;height:111px;background:#c6c9d2"></div><div style="position:absolute;left:531px;top:431px;width:1px;height:111px;background:#c6c9d2"></div><div style="position:absolute;left:603px;top:431px;width:1px;height:111px;background:#c6c9d2"></div><div style="position:absolute;left:634px;top:431px;width:1px;height:111px;background:#c6c9d2"></div><div style="position:absolute;left:708px;top:431px;width:1px;height:111px;background:#c6c9d2"></div><div style="position:absolute;left:779px;top:431px;width:1px;height:111px;background:#c6c9d2"></div><div style="position:absolute;left:810px;top:431px;width:1px;height:111px;background:#c6c9d2"></div><div style="position:absolute;left:886px;top:431px;width:1px;height:111px;background:#c6c9d2"></div><div style="position:absolute;left:953px;top:431px;width:1px;height:111px;background:#c6c9d2"></div><div style="position:absolute;left:985px;top:431px;width:1px;height:111px;background:#c6c9d2"></div><div style="position:absolute;left:1061px;top:431px;width:1px;height:111px;background:#c6c9d2"></div><div style="position:absolute;left:1135px;top:431px;width:1px;height:111px;background:#c6c9d2"></div><div style="position:absolute;left:1167px;top:431px;width:1px;height:111px;background:#c6c9d2"></div><div style="position:absolute;left:1235px;top:431px;width:1px;height:111px;background:#c6c9d2"></div><div style="position:absolute;left:1301px;top:431px;width:1px;height:111px;background:#c6c9d2"></div><div style="position:absolute;left:1332px;top:431px;width:1px;height:111px;background:#c6c9d2"></div><div style="position:absolute;left:1402px;top:431px;width:1px;height:111px;background:#c6c9d2"></div><div style="position:absolute;left:1479px;top:431px;width:1px;height:111px;background:#c6c9d2"></div><div style="position:absolute;left:1511px;top:431px;width:1px;height:111px;background:#c6c9d2"></div><div style="position:absolute;left:1583px;top:431px;width:1px;height:111px;background:#c6c9d2"></div><div style="position:absolute;left:1659px;top:431px;width:1px;height:111px;background:#c6c9d2"></div><div style="position:absolute;left:1690px;top:431px;width:1px;height:111px;background:#c6c9d2"></div><div style="position:absolute;left:1757px;top:431px;width:1px;height:111px;background:#c6c9d2"></div><div style="position:absolute;left:1827px;top:431px;width:1px;height:111px;background:#c6c9d2"></div><svg style="position:absolute;left:89px;top:442px;" width="10" height="10" viewBox="0 0 10 10"><rect x="0.5" y="0.5" width="8.5" height="8.5" fill="#fff" stroke="#111" stroke-width="1.1"/><path d="M2.3 4.75 L7.2 4.75 M4.75 2.3 L4.75 7.2" stroke="#111" stroke-width="1.1"/></svg><div style="position:absolute;left:100px;top:430.5px;width:120px;height:31px;line-height:31px;font-size:16px;color:#6b7590;text-align:left;font-weight:bold;white-space:nowrap;-webkit-text-stroke:0.2px #6b7590"><span style="display:inline-block;transform:scaleX(0.77);transform-origin:0% 50%;white-space:nowrap">Ubezpieczyciele</span></div><svg style="position:absolute;left:261px;top:438px;" width="7" height="12" viewBox="0 0 7 12"><path d="M0.4 4 L3.1 0.6 L5.8 4 Z M0.4 7.6 L3.1 11.2 L5.8 7.6 Z" fill="#111"/></svg><svg style="position:absolute;left:338px;top:438px;" width="7" height="12" viewBox="0 0 7 12"><path d="M0.4 4 L3.1 0.6 L5.8 4 Z M0.4 7.6 L3.1 11.2 L5.8 7.6 Z" fill="#111"/></svg><svg style="position:absolute;left:410px;top:438px;" width="7" height="12" viewBox="0 0 7 12"><path d="M0.4 4 L3.1 0.6 L5.8 4 Z M0.4 7.6 L3.1 11.2 L5.8 7.6 Z" fill="#111"/></svg><svg style="position:absolute;left:441px;top:438px;" width="7" height="12" viewBox="0 0 7 12"><path d="M0.4 4 L3.1 0.6 L5.8 4 Z M0.4 7.6 L3.1 11.2 L5.8 7.6 Z" fill="#111"/></svg><svg style="position:absolute;left:516px;top:438px;" width="7" height="12" viewBox="0 0 7 12"><path d="M0.4 4 L3.1 0.6 L5.8 4 Z M0.4 7.6 L3.1 11.2 L5.8 7.6 Z" fill="#111"/></svg><svg style="position:absolute;left:588px;top:438px;" width="7" height="12" viewBox="0 0 7 12"><path d="M0.4 4 L3.1 0.6 L5.8 4 Z M0.4 7.6 L3.1 11.2 L5.8 7.6 Z" fill="#111"/></svg><svg style="position:absolute;left:619px;top:438px;" width="7" height="12" viewBox="0 0 7 12"><path d="M0.4 4 L3.1 0.6 L5.8 4 Z M0.4 7.6 L3.1 11.2 L5.8 7.6 Z" fill="#111"/></svg><svg style="position:absolute;left:693px;top:438px;" width="7" height="12" viewBox="0 0 7 12"><path d="M0.4 4 L3.1 0.6 L5.8 4 Z M0.4 7.6 L3.1 11.2 L5.8 7.6 Z" fill="#111"/></svg><svg style="position:absolute;left:764px;top:438px;" width="7" height="12" viewBox="0 0 7 12"><path d="M0.4 4 L3.1 0.6 L5.8 4 Z M0.4 7.6 L3.1 11.2 L5.8 7.6 Z" fill="#111"/></svg><svg style="position:absolute;left:795px;top:438px;" width="7" height="12" viewBox="0 0 7 12"><path d="M0.4 4 L3.1 0.6 L5.8 4 Z M0.4 7.6 L3.1 11.2 L5.8 7.6 Z" fill="#111"/></svg><svg style="position:absolute;left:871px;top:438px;" width="7" height="12" viewBox="0 0 7 12"><path d="M0.4 4 L3.1 0.6 L5.8 4 Z M0.4 7.6 L3.1 11.2 L5.8 7.6 Z" fill="#111"/></svg><svg style="position:absolute;left:938px;top:438px;" width="7" height="12" viewBox="0 0 7 12"><path d="M0.4 4 L3.1 0.6 L5.8 4 Z M0.4 7.6 L3.1 11.2 L5.8 7.6 Z" fill="#111"/></svg><svg style="position:absolute;left:970px;top:438px;" width="7" height="12" viewBox="0 0 7 12"><path d="M0.4 4 L3.1 0.6 L5.8 4 Z M0.4 7.6 L3.1 11.2 L5.8 7.6 Z" fill="#111"/></svg><svg style="position:absolute;left:1046px;top:438px;" width="7" height="12" viewBox="0 0 7 12"><path d="M0.4 4 L3.1 0.6 L5.8 4 Z M0.4 7.6 L3.1 11.2 L5.8 7.6 Z" fill="#111"/></svg><svg style="position:absolute;left:1120px;top:438px;" width="7" height="12" viewBox="0 0 7 12"><path d="M0.4 4 L3.1 0.6 L5.8 4 Z M0.4 7.6 L3.1 11.2 L5.8 7.6 Z" fill="#111"/></svg><svg style="position:absolute;left:1152px;top:438px;" width="7" height="12" viewBox="0 0 7 12"><path d="M0.4 4 L3.1 0.6 L5.8 4 Z M0.4 7.6 L3.1 11.2 L5.8 7.6 Z" fill="#111"/></svg><svg style="position:absolute;left:1220px;top:438px;" width="7" height="12" viewBox="0 0 7 12"><path d="M0.4 4 L3.1 0.6 L5.8 4 Z M0.4 7.6 L3.1 11.2 L5.8 7.6 Z" fill="#111"/></svg><svg style="position:absolute;left:1286px;top:438px;" width="7" height="12" viewBox="0 0 7 12"><path d="M0.4 4 L3.1 0.6 L5.8 4 Z M0.4 7.6 L3.1 11.2 L5.8 7.6 Z" fill="#111"/></svg><svg style="position:absolute;left:1317px;top:438px;" width="7" height="12" viewBox="0 0 7 12"><path d="M0.4 4 L3.1 0.6 L5.8 4 Z M0.4 7.6 L3.1 11.2 L5.8 7.6 Z" fill="#111"/></svg><svg style="position:absolute;left:1387px;top:438px;" width="7" height="12" viewBox="0 0 7 12"><path d="M0.4 4 L3.1 0.6 L5.8 4 Z M0.4 7.6 L3.1 11.2 L5.8 7.6 Z" fill="#111"/></svg><svg style="position:absolute;left:1464px;top:438px;" width="7" height="12" viewBox="0 0 7 12"><path d="M0.4 4 L3.1 0.6 L5.8 4 Z M0.4 7.6 L3.1 11.2 L5.8 7.6 Z" fill="#111"/></svg><svg style="position:absolute;left:1496px;top:438px;" width="7" height="12" viewBox="0 0 7 12"><path d="M0.4 4 L3.1 0.6 L5.8 4 Z M0.4 7.6 L3.1 11.2 L5.8 7.6 Z" fill="#111"/></svg><svg style="position:absolute;left:1568px;top:438px;" width="7" height="12" viewBox="0 0 7 12"><path d="M0.4 4 L3.1 0.6 L5.8 4 Z M0.4 7.6 L3.1 11.2 L5.8 7.6 Z" fill="#111"/></svg><svg style="position:absolute;left:1644px;top:438px;" width="7" height="12" viewBox="0 0 7 12"><path d="M0.4 4 L3.1 0.6 L5.8 4 Z M0.4 7.6 L3.1 11.2 L5.8 7.6 Z" fill="#111"/></svg><svg style="position:absolute;left:1675px;top:438px;" width="7" height="12" viewBox="0 0 7 12"><path d="M0.4 4 L3.1 0.6 L5.8 4 Z M0.4 7.6 L3.1 11.2 L5.8 7.6 Z" fill="#111"/></svg><svg style="position:absolute;left:1742px;top:438px;" width="7" height="12" viewBox="0 0 7 12"><path d="M0.4 4 L3.1 0.6 L5.8 4 Z M0.4 7.6 L3.1 11.2 L5.8 7.6 Z" fill="#111"/></svg><svg style="position:absolute;left:1812px;top:438px;" width="7" height="12" viewBox="0 0 7 12"><path d="M0.4 4 L3.1 0.6 L5.8 4 Z M0.4 7.6 L3.1 11.2 L5.8 7.6 Z" fill="#111"/></svg><svg style="position:absolute;left:1844px;top:438px;" width="7" height="12" viewBox="0 0 7 12"><path d="M0.4 4 L3.1 0.6 L5.8 4 Z M0.4 7.6 L3.1 11.2 L5.8 7.6 Z" fill="#111"/></svg><div style="position:absolute;left:87px;top:461px;width:120px;height:28px;line-height:28px;font-size:16px;color:#6b6f7e;text-align:left;font-weight:normal;white-space:nowrap;"><span style="display:inline-block;transform:scaleX(0.76);transform-origin:0% 50%;white-space:nowrap">PZU</span></div><div style="position:absolute;left:215px;top:461px;width:57.5px;height:28px;line-height:28px;font-size:16px;color:#6b6f7e;text-align:right;font-weight:normal;white-space:nowrap;"><span style="display:inline-block;transform:scaleX(0.814);transform-origin:100% 50%;white-space:nowrap">415</span></div><div style="position:absolute;left:276px;top:461px;width:73.5px;height:28px;line-height:28px;font-size:16px;color:#6b6f7e;text-align:right;font-weight:normal;white-space:nowrap;"><span style="display:inline-block;transform:scaleX(0.814);transform-origin:100% 50%;white-space:nowrap">2 433 781</span></div><div style="position:absolute;left:353px;top:461px;width:68.5px;height:28px;line-height:28px;font-size:16px;color:#6b6f7e;text-align:right;font-weight:normal;white-space:nowrap;"><span style="display:inline-block;transform:scaleX(0.814);transform-origin:100% 50%;white-space:nowrap">1 387 172</span></div><div style="position:absolute;left:425px;top:461px;width:27.5px;height:28px;line-height:28px;font-size:16px;color:#6b6f7e;text-align:right;font-weight:normal;white-space:nowrap;"><span style="display:inline-block;transform:scaleX(0.814);transform-origin:100% 50%;white-space:nowrap">57</span></div><div style="position:absolute;left:456px;top:461px;width:71.5px;height:28px;line-height:28px;font-size:16px;color:#6b6f7e;text-align:right;font-weight:normal;white-space:nowrap;"><span style="display:inline-block;transform:scaleX(0.814);transform-origin:100% 50%;white-space:nowrap">534 525</span></div><div style="position:absolute;left:531px;top:461px;width:68.5px;height:28px;line-height:28px;font-size:16px;color:#6b6f7e;text-align:right;font-weight:normal;white-space:nowrap;"><span style="display:inline-block;transform:scaleX(0.814);transform-origin:100% 50%;white-space:nowrap">534 525</span></div><div style="position:absolute;left:603px;top:461px;width:27.5px;height:28px;line-height:28px;font-size:16px;color:#6b6f7e;text-align:right;font-weight:normal;white-space:nowrap;"><span style="display:inline-block;transform:scaleX(0.814);transform-origin:100% 50%;white-space:nowrap">100</span></div><div style="position:absolute;left:634px;top:461px;width:70.5px;height:28px;line-height:28px;font-size:16px;color:#6b6f7e;text-align:right;font-weight:normal;white-space:nowrap;"><span style="display:inline-block;transform:scaleX(0.814);transform-origin:100% 50%;white-space:nowrap">300 876</span></div><div style="position:absolute;left:708px;top:461px;width:67.5px;height:28px;line-height:28px;font-size:16px;color:#6b6f7e;text-align:right;font-weight:normal;white-space:nowrap;"><span style="display:inline-block;transform:scaleX(0.814);transform-origin:100% 50%;white-space:nowrap">300 876</span></div><div style="position:absolute;left:779px;top:461px;width:27.5px;height:28px;line-height:28px;font-size:16px;color:#6b6f7e;text-align:right;font-weight:normal;white-space:nowrap;"><span style="display:inline-block;transform:scaleX(0.814);transform-origin:100% 50%;white-space:nowrap">100</span></div><div style="position:absolute;left:810px;top:461px;width:72.5px;height:28px;line-height:28px;font-size:16px;color:#6b6f7e;text-align:right;font-weight:normal;white-space:nowrap;"><span style="display:inline-block;transform:scaleX(0.814);transform-origin:100% 50%;white-space:nowrap">1 251 415</span></div><div style="position:absolute;left:886px;top:461px;width:63.5px;height:28px;line-height:28px;font-size:16px;color:#6b6f7e;text-align:right;font-weight:normal;white-space:nowrap;"><span style="display:inline-block;transform:scaleX(0.814);transform-origin:100% 50%;white-space:nowrap">345 844</span></div><div style="position:absolute;left:953px;top:461px;width:28.5px;height:28px;line-height:28px;font-size:16px;color:#6b6f7e;text-align:right;font-weight:normal;white-space:nowrap;"><span style="display:inline-block;transform:scaleX(0.814);transform-origin:100% 50%;white-space:nowrap">28</span></div><div style="position:absolute;left:985px;top:461px;width:72.5px;height:28px;line-height:28px;font-size:16px;color:#6b6f7e;text-align:right;font-weight:normal;white-space:nowrap;"><span style="display:inline-block;transform:scaleX(0.814);transform-origin:100% 50%;white-space:nowrap">283 505</span></div><div style="position:absolute;left:1061px;top:461px;width:70.5px;height:28px;line-height:28px;font-size:16px;color:#6b6f7e;text-align:right;font-weight:normal;white-space:nowrap;"><span style="display:inline-block;transform:scaleX(0.814);transform-origin:100% 50%;white-space:nowrap">149 982</span></div><div style="position:absolute;left:1135px;top:461px;width:28.5px;height:28px;line-height:28px;font-size:16px;color:#6b6f7e;text-align:right;font-weight:normal;white-space:nowrap;"><span style="display:inline-block;transform:scaleX(0.814);transform-origin:100% 50%;white-space:nowrap">53</span></div><div style="position:absolute;left:1167px;top:461px;width:64.5px;height:28px;line-height:28px;font-size:16px;color:#6b6f7e;text-align:right;font-weight:normal;white-space:nowrap;"><span style="display:inline-block;transform:scaleX(0.814);transform-origin:100% 50%;white-space:nowrap">25 168</span></div><div style="position:absolute;left:1235px;top:461px;width:62.5px;height:28px;line-height:28px;font-size:16px;color:#6b6f7e;text-align:right;font-weight:normal;white-space:nowrap;"><span style="display:inline-block;transform:scaleX(0.814);transform-origin:100% 50%;white-space:nowrap">17 847</span></div><div style="position:absolute;left:1301px;top:461px;width:27.5px;height:28px;line-height:28px;font-size:16px;color:#6b6f7e;text-align:right;font-weight:normal;white-space:nowrap;"><span style="display:inline-block;transform:scaleX(0.814);transform-origin:100% 50%;white-space:nowrap">71</span></div><div style="position:absolute;left:1332px;top:461px;width:66.5px;height:28px;line-height:28px;font-size:16px;color:#6b6f7e;text-align:right;font-weight:normal;white-space:nowrap;"><span style="display:inline-block;transform:scaleX(0.814);transform-origin:100% 50%;white-space:nowrap">4 729</span></div><div style="position:absolute;left:1402px;top:461px;width:73.5px;height:28px;line-height:28px;font-size:16px;color:#6b6f7e;text-align:right;font-weight:normal;white-space:nowrap;"><span style="display:inline-block;transform:scaleX(0.814);transform-origin:100% 50%;white-space:nowrap">4 729</span></div><div style="position:absolute;left:1479px;top:461px;width:28.5px;height:28px;line-height:28px;font-size:16px;color:#6b6f7e;text-align:right;font-weight:normal;white-space:nowrap;"><span style="display:inline-block;transform:scaleX(0.814);transform-origin:100% 50%;white-space:nowrap">100</span></div><div style="position:absolute;left:1511px;top:461px;width:68.5px;height:28px;line-height:28px;font-size:16px;color:#6b6f7e;text-align:right;font-weight:normal;white-space:nowrap;"><span style="display:inline-block;transform:scaleX(0.814);transform-origin:100% 50%;white-space:nowrap">21 249</span></div><div style="position:absolute;left:1583px;top:461px;width:72.5px;height:28px;line-height:28px;font-size:16px;color:#6b6f7e;text-align:right;font-weight:normal;white-space:nowrap;"><span style="display:inline-block;transform:scaleX(0.814);transform-origin:100% 50%;white-space:nowrap">21 200</span></div><div style="position:absolute;left:1659px;top:461px;width:27.5px;height:28px;line-height:28px;font-size:16px;color:#6b6f7e;text-align:right;font-weight:normal;white-space:nowrap;"><span style="display:inline-block;transform:scaleX(0.814);transform-origin:100% 50%;white-space:nowrap">100</span></div><div style="position:absolute;left:1690px;top:461px;width:63.5px;height:28px;line-height:28px;font-size:16px;color:#6b6f7e;text-align:right;font-weight:normal;white-space:nowrap;"><span style="display:inline-block;transform:scaleX(0.814);transform-origin:100% 50%;white-space:nowrap">7 459</span></div><div style="position:absolute;left:1757px;top:461px;width:66.5px;height:28px;line-height:28px;font-size:16px;color:#6b6f7e;text-align:right;font-weight:normal;white-space:nowrap;"><span style="display:inline-block;transform:scaleX(0.814);transform-origin:100% 50%;white-space:nowrap">7 450</span></div><div style="position:absolute;left:1827px;top:461px;width:28.5px;height:28px;line-height:28px;font-size:16px;color:#6b6f7e;text-align:right;font-weight:normal;white-space:nowrap;"><span style="display:inline-block;transform:scaleX(0.814);transform-origin:100% 50%;white-space:nowrap">100</span></div><div style="position:absolute;left:87px;top:488px;width:120px;height:28px;line-height:28px;font-size:16px;color:#6b6f7e;text-align:left;font-weight:normal;white-space:nowrap;"><span style="display:inline-block;transform:scaleX(0.76);transform-origin:0% 50%;white-space:nowrap">HESTIA</span></div><div style="position:absolute;left:215px;top:488px;width:57.5px;height:28px;line-height:28px;font-size:16px;color:#6b6f7e;text-align:right;font-weight:normal;white-space:nowrap;"><span style="display:inline-block;transform:scaleX(0.814);transform-origin:100% 50%;white-space:nowrap">151</span></div><div style="position:absolute;left:276px;top:488px;width:73.5px;height:28px;line-height:28px;font-size:16px;color:#6b6f7e;text-align:right;font-weight:normal;white-space:nowrap;"><span style="display:inline-block;transform:scaleX(0.814);transform-origin:100% 50%;white-space:nowrap">1 008 949</span></div><div style="position:absolute;left:353px;top:488px;width:68.5px;height:28px;line-height:28px;font-size:16px;color:#6b6f7e;text-align:right;font-weight:normal;white-space:nowrap;"><span style="display:inline-block;transform:scaleX(0.814);transform-origin:100% 50%;white-space:nowrap">556 627</span></div><div style="position:absolute;left:425px;top:488px;width:27.5px;height:28px;line-height:28px;font-size:16px;color:#6b6f7e;text-align:right;font-weight:normal;white-space:nowrap;"><span style="display:inline-block;transform:scaleX(0.814);transform-origin:100% 50%;white-space:nowrap">55</span></div><div style="position:absolute;left:456px;top:488px;width:71.5px;height:28px;line-height:28px;font-size:16px;color:#6b6f7e;text-align:right;font-weight:normal;white-space:nowrap;"><span style="display:inline-block;transform:scaleX(0.814);transform-origin:100% 50%;white-space:nowrap">190 540</span></div><div style="position:absolute;left:531px;top:488px;width:68.5px;height:28px;line-height:28px;font-size:16px;color:#6b6f7e;text-align:right;font-weight:normal;white-space:nowrap;"><span style="display:inline-block;transform:scaleX(0.814);transform-origin:100% 50%;white-space:nowrap">190 540</span></div><div style="position:absolute;left:603px;top:488px;width:27.5px;height:28px;line-height:28px;font-size:16px;color:#6b6f7e;text-align:right;font-weight:normal;white-space:nowrap;"><span style="display:inline-block;transform:scaleX(0.814);transform-origin:100% 50%;white-space:nowrap">100</span></div><div style="position:absolute;left:634px;top:488px;width:70.5px;height:28px;line-height:28px;font-size:16px;color:#6b6f7e;text-align:right;font-weight:normal;white-space:nowrap;"><span style="display:inline-block;transform:scaleX(0.814);transform-origin:100% 50%;white-space:nowrap">112 394</span></div><div style="position:absolute;left:708px;top:488px;width:67.5px;height:28px;line-height:28px;font-size:16px;color:#6b6f7e;text-align:right;font-weight:normal;white-space:nowrap;"><span style="display:inline-block;transform:scaleX(0.814);transform-origin:100% 50%;white-space:nowrap">112 394</span></div><div style="position:absolute;left:779px;top:488px;width:27.5px;height:28px;line-height:28px;font-size:16px;color:#6b6f7e;text-align:right;font-weight:normal;white-space:nowrap;"><span style="display:inline-block;transform:scaleX(0.814);transform-origin:100% 50%;white-space:nowrap">100</span></div><div style="position:absolute;left:810px;top:488px;width:72.5px;height:28px;line-height:28px;font-size:16px;color:#6b6f7e;text-align:right;font-weight:normal;white-space:nowrap;"><span style="display:inline-block;transform:scaleX(0.814);transform-origin:100% 50%;white-space:nowrap">578 071</span></div><div style="position:absolute;left:886px;top:488px;width:63.5px;height:28px;line-height:28px;font-size:16px;color:#6b6f7e;text-align:right;font-weight:normal;white-space:nowrap;"><span style="display:inline-block;transform:scaleX(0.814);transform-origin:100% 50%;white-space:nowrap">184 650</span></div><div style="position:absolute;left:953px;top:488px;width:28.5px;height:28px;line-height:28px;font-size:16px;color:#6b6f7e;text-align:right;font-weight:normal;white-space:nowrap;"><span style="display:inline-block;transform:scaleX(0.814);transform-origin:100% 50%;white-space:nowrap">32</span></div><div style="position:absolute;left:985px;top:488px;width:72.5px;height:28px;line-height:28px;font-size:16px;color:#6b6f7e;text-align:right;font-weight:normal;white-space:nowrap;"><span style="display:inline-block;transform:scaleX(0.814);transform-origin:100% 50%;white-space:nowrap">107 910</span></div><div style="position:absolute;left:1061px;top:488px;width:70.5px;height:28px;line-height:28px;font-size:16px;color:#6b6f7e;text-align:right;font-weight:normal;white-space:nowrap;"><span style="display:inline-block;transform:scaleX(0.814);transform-origin:100% 50%;white-space:nowrap">53 899</span></div><div style="position:absolute;left:1135px;top:488px;width:28.5px;height:28px;line-height:28px;font-size:16px;color:#6b6f7e;text-align:right;font-weight:normal;white-space:nowrap;"><span style="display:inline-block;transform:scaleX(0.814);transform-origin:100% 50%;white-space:nowrap">50</span></div><div style="position:absolute;left:1167px;top:488px;width:64.5px;height:28px;line-height:28px;font-size:16px;color:#6b6f7e;text-align:right;font-weight:normal;white-space:nowrap;"><span style="display:inline-block;transform:scaleX(0.814);transform-origin:100% 50%;white-space:nowrap">11 497</span></div><div style="position:absolute;left:1235px;top:488px;width:62.5px;height:28px;line-height:28px;font-size:16px;color:#6b6f7e;text-align:right;font-weight:normal;white-space:nowrap;"><span style="display:inline-block;transform:scaleX(0.814);transform-origin:100% 50%;white-space:nowrap">7 978</span></div><div style="position:absolute;left:1301px;top:488px;width:27.5px;height:28px;line-height:28px;font-size:16px;color:#6b6f7e;text-align:right;font-weight:normal;white-space:nowrap;"><span style="display:inline-block;transform:scaleX(0.814);transform-origin:100% 50%;white-space:nowrap">69</span></div><div style="position:absolute;left:1332px;top:488px;width:66.5px;height:28px;line-height:28px;font-size:16px;color:#6b6f7e;text-align:right;font-weight:normal;white-space:nowrap;"><span style="display:inline-block;transform:scaleX(0.814);transform-origin:100% 50%;white-space:nowrap">2 152</span></div><div style="position:absolute;left:1402px;top:488px;width:73.5px;height:28px;line-height:28px;font-size:16px;color:#6b6f7e;text-align:right;font-weight:normal;white-space:nowrap;"><span style="display:inline-block;transform:scaleX(0.814);transform-origin:100% 50%;white-space:nowrap">2 152</span></div><div style="position:absolute;left:1479px;top:488px;width:28.5px;height:28px;line-height:28px;font-size:16px;color:#6b6f7e;text-align:right;font-weight:normal;white-space:nowrap;"><span style="display:inline-block;transform:scaleX(0.814);transform-origin:100% 50%;white-space:nowrap">100</span></div><div style="position:absolute;left:1511px;top:488px;width:68.5px;height:28px;line-height:28px;font-size:16px;color:#6b6f7e;text-align:right;font-weight:normal;white-space:nowrap;"><span style="display:inline-block;transform:scaleX(0.814);transform-origin:100% 50%;white-space:nowrap">2 427</span></div><div style="position:absolute;left:1583px;top:488px;width:72.5px;height:28px;line-height:28px;font-size:16px;color:#6b6f7e;text-align:right;font-weight:normal;white-space:nowrap;"><span style="display:inline-block;transform:scaleX(0.814);transform-origin:100% 50%;white-space:nowrap">2 427</span></div><div style="position:absolute;left:1659px;top:488px;width:27.5px;height:28px;line-height:28px;font-size:16px;color:#6b6f7e;text-align:right;font-weight:normal;white-space:nowrap;"><span style="display:inline-block;transform:scaleX(0.814);transform-origin:100% 50%;white-space:nowrap">100</span></div><div style="position:absolute;left:1690px;top:488px;width:63.5px;height:28px;line-height:28px;font-size:16px;color:#6b6f7e;text-align:right;font-weight:normal;white-space:nowrap;"><span style="display:inline-block;transform:scaleX(0.814);transform-origin:100% 50%;white-space:nowrap">3 237</span></div><div style="position:absolute;left:1757px;top:488px;width:66.5px;height:28px;line-height:28px;font-size:16px;color:#6b6f7e;text-align:right;font-weight:normal;white-space:nowrap;"><span style="display:inline-block;transform:scaleX(0.814);transform-origin:100% 50%;white-space:nowrap">2 211</span></div><div style="position:absolute;left:1827px;top:488px;width:28.5px;height:28px;line-height:28px;font-size:16px;color:#6b6f7e;text-align:right;font-weight:normal;white-space:nowrap;"><span style="display:inline-block;transform:scaleX(0.814);transform-origin:100% 50%;white-space:nowrap">68</span></div><div style="position:absolute;left:87px;top:515px;width:120px;height:28px;line-height:28px;font-size:16px;color:#6b6f7e;text-align:left;font-weight:normal;white-space:nowrap;"><span style="display:inline-block;transform:scaleX(0.76);transform-origin:0% 50%;white-space:nowrap">AVIVA</span></div><div style="position:absolute;left:215px;top:515px;width:57.5px;height:28px;line-height:28px;font-size:16px;color:#6b6f7e;text-align:right;font-weight:normal;white-space:nowrap;"><span style="display:inline-block;transform:scaleX(0.814);transform-origin:100% 50%;white-space:nowrap">5</span></div><div style="position:absolute;left:276px;top:515px;width:73.5px;height:28px;line-height:28px;font-size:16px;color:#6b6f7e;text-align:right;font-weight:normal;white-space:nowrap;"><span style="display:inline-block;transform:scaleX(0.814);transform-origin:100% 50%;white-space:nowrap">44 703</span></div><div style="position:absolute;left:353px;top:515px;width:68.5px;height:28px;line-height:28px;font-size:16px;color:#6b6f7e;text-align:right;font-weight:normal;white-space:nowrap;"><span style="display:inline-block;transform:scaleX(0.814);transform-origin:100% 50%;white-space:nowrap">24 911</span></div><div style="position:absolute;left:425px;top:515px;width:27.5px;height:28px;line-height:28px;font-size:16px;color:#6b6f7e;text-align:right;font-weight:normal;white-space:nowrap;"><span style="display:inline-block;transform:scaleX(0.814);transform-origin:100% 50%;white-space:nowrap">56</span></div><div style="position:absolute;left:456px;top:515px;width:71.5px;height:28px;line-height:28px;font-size:16px;color:#6b6f7e;text-align:right;font-weight:normal;white-space:nowrap;"><span style="display:inline-block;transform:scaleX(0.814);transform-origin:100% 50%;white-space:nowrap">6 461</span></div><div style="position:absolute;left:531px;top:515px;width:68.5px;height:28px;line-height:28px;font-size:16px;color:#6b6f7e;text-align:right;font-weight:normal;white-space:nowrap;"><span style="display:inline-block;transform:scaleX(0.814);transform-origin:100% 50%;white-space:nowrap">6 461</span></div><div style="position:absolute;left:603px;top:515px;width:27.5px;height:28px;line-height:28px;font-size:16px;color:#6b6f7e;text-align:right;font-weight:normal;white-space:nowrap;"><span style="display:inline-block;transform:scaleX(0.814);transform-origin:100% 50%;white-space:nowrap">100</span></div><div style="position:absolute;left:634px;top:515px;width:70.5px;height:28px;line-height:28px;font-size:16px;color:#6b6f7e;text-align:right;font-weight:normal;white-space:nowrap;"><span style="display:inline-block;transform:scaleX(0.814);transform-origin:100% 50%;white-space:nowrap">6 048</span></div><div style="position:absolute;left:708px;top:515px;width:67.5px;height:28px;line-height:28px;font-size:16px;color:#6b6f7e;text-align:right;font-weight:normal;white-space:nowrap;"><span style="display:inline-block;transform:scaleX(0.814);transform-origin:100% 50%;white-space:nowrap">6 048</span></div><div style="position:absolute;left:779px;top:515px;width:27.5px;height:28px;line-height:28px;font-size:16px;color:#6b6f7e;text-align:right;font-weight:normal;white-space:nowrap;"><span style="display:inline-block;transform:scaleX(0.814);transform-origin:100% 50%;white-space:nowrap">100</span></div><div style="position:absolute;left:810px;top:515px;width:72.5px;height:28px;line-height:28px;font-size:16px;color:#6b6f7e;text-align:right;font-weight:normal;white-space:nowrap;"><span style="display:inline-block;transform:scaleX(0.814);transform-origin:100% 50%;white-space:nowrap">26 695</span></div><div style="position:absolute;left:886px;top:515px;width:63.5px;height:28px;line-height:28px;font-size:16px;color:#6b6f7e;text-align:right;font-weight:normal;white-space:nowrap;"><span style="display:inline-block;transform:scaleX(0.814);transform-origin:100% 50%;white-space:nowrap">9 186</span></div><div style="position:absolute;left:953px;top:515px;width:28.5px;height:28px;line-height:28px;font-size:16px;color:#6b6f7e;text-align:right;font-weight:normal;white-space:nowrap;"><span style="display:inline-block;transform:scaleX(0.814);transform-origin:100% 50%;white-space:nowrap">34</span></div><div style="position:absolute;left:985px;top:515px;width:72.5px;height:28px;line-height:28px;font-size:16px;color:#6b6f7e;text-align:right;font-weight:normal;white-space:nowrap;"><span style="display:inline-block;transform:scaleX(0.814);transform-origin:100% 50%;white-space:nowrap">4 934</span></div><div style="position:absolute;left:1061px;top:515px;width:70.5px;height:28px;line-height:28px;font-size:16px;color:#6b6f7e;text-align:right;font-weight:normal;white-space:nowrap;"><span style="display:inline-block;transform:scaleX(0.814);transform-origin:100% 50%;white-space:nowrap">2 809</span></div><div style="position:absolute;left:1135px;top:515px;width:28.5px;height:28px;line-height:28px;font-size:16px;color:#6b6f7e;text-align:right;font-weight:normal;white-space:nowrap;"><span style="display:inline-block;transform:scaleX(0.814);transform-origin:100% 50%;white-space:nowrap">57</span></div><div style="position:absolute;left:1167px;top:515px;width:64.5px;height:28px;line-height:28px;font-size:16px;color:#6b6f7e;text-align:right;font-weight:normal;white-space:nowrap;"><span style="display:inline-block;transform:scaleX(0.814);transform-origin:100% 50%;white-space:nowrap">527</span></div><div style="position:absolute;left:1235px;top:515px;width:62.5px;height:28px;line-height:28px;font-size:16px;color:#6b6f7e;text-align:right;font-weight:normal;white-space:nowrap;"><span style="display:inline-block;transform:scaleX(0.814);transform-origin:100% 50%;white-space:nowrap">369</span></div><div style="position:absolute;left:1301px;top:515px;width:27.5px;height:28px;line-height:28px;font-size:16px;color:#6b6f7e;text-align:right;font-weight:normal;white-space:nowrap;"><span style="display:inline-block;transform:scaleX(0.814);transform-origin:100% 50%;white-space:nowrap">70</span></div><div style="position:absolute;left:1332px;top:515px;width:66.5px;height:28px;line-height:28px;font-size:16px;color:#6b6f7e;text-align:right;font-weight:normal;white-space:nowrap;"><span style="display:inline-block;transform:scaleX(0.814);transform-origin:100% 50%;white-space:nowrap">0</span></div><div style="position:absolute;left:1402px;top:515px;width:73.5px;height:28px;line-height:28px;font-size:16px;color:#6b6f7e;text-align:right;font-weight:normal;white-space:nowrap;"><span style="display:inline-block;transform:scaleX(0.814);transform-origin:100% 50%;white-space:nowrap">0</span></div><div style="position:absolute;left:1479px;top:515px;width:28.5px;height:28px;line-height:28px;font-size:16px;color:#6b6f7e;text-align:right;font-weight:normal;white-space:nowrap;"><span style="display:inline-block;transform:scaleX(0.814);transform-origin:100% 50%;white-space:nowrap">0</span></div><div style="position:absolute;left:1511px;top:515px;width:68.5px;height:28px;line-height:28px;font-size:16px;color:#6b6f7e;text-align:right;font-weight:normal;white-space:nowrap;"><span style="display:inline-block;transform:scaleX(0.814);transform-origin:100% 50%;white-space:nowrap">0</span></div><div style="position:absolute;left:1583px;top:515px;width:72.5px;height:28px;line-height:28px;font-size:16px;color:#6b6f7e;text-align:right;font-weight:normal;white-space:nowrap;"><span style="display:inline-block;transform:scaleX(0.814);transform-origin:100% 50%;white-space:nowrap">0</span></div><div style="position:absolute;left:1659px;top:515px;width:27.5px;height:28px;line-height:28px;font-size:16px;color:#6b6f7e;text-align:right;font-weight:normal;white-space:nowrap;"><span style="display:inline-block;transform:scaleX(0.814);transform-origin:100% 50%;white-space:nowrap">0</span></div><div style="position:absolute;left:1690px;top:515px;width:63.5px;height:28px;line-height:28px;font-size:16px;color:#6b6f7e;text-align:right;font-weight:normal;white-space:nowrap;"><span style="display:inline-block;transform:scaleX(0.814);transform-origin:100% 50%;white-space:nowrap">39</span></div><div style="position:absolute;left:1757px;top:515px;width:66.5px;height:28px;line-height:28px;font-size:16px;color:#6b6f7e;text-align:right;font-weight:normal;white-space:nowrap;"><span style="display:inline-block;transform:scaleX(0.814);transform-origin:100% 50%;white-space:nowrap">39</span></div><div style="position:absolute;left:1827px;top:515px;width:28.5px;height:28px;line-height:28px;font-size:16px;color:#6b6f7e;text-align:right;font-weight:normal;white-space:nowrap;"><span style="display:inline-block;transform:scaleX(0.814);transform-origin:100% 50%;white-space:nowrap">100</span></div><div style="position:absolute;left:81px;top:546px;width:1328px;height:370px;background:#e5e8f0;border:1px solid #c9c9cc;box-sizing:border-box;box-shadow:1px 1px 1px rgba(0,0,0,0.08)"></div><div style="position:absolute;left:126px;top:559px;width:220px;height:24px;line-height:24px;font-size:15px;color:#333;text-align:left;font-weight:normal;white-space:nowrap;"><span style="display:inline-block;transform:scaleX(0.99);transform-origin:0% 50%;white-space:nowrap">Grupowanie&nbsp; : Ubezpieczyciel</span></div><div style="position:absolute;left:433px;top:559px;width:240px;height:24px;line-height:24px;font-size:15px;color:#333;text-align:left;font-weight:normal;white-space:nowrap;"><span style="display:inline-block;transform:scaleX(0.98);transform-origin:0% 50%;white-space:nowrap">Wskaźnik : Liczba szkód - ogółem</span></div><svg style="position:absolute;left:81px;top:546px;" width="1328" height="370" viewBox="0 0 1328 370"><rect x="110" y="293.80" width="1035" height="1" fill="#d9dce1"/><rect x="110" y="247.00" width="1035" height="1" fill="#d9dce1"/><rect x="110" y="200.20" width="1035" height="1" fill="#d9dce1"/><rect x="110" y="153.40" width="1035" height="1" fill="#d9dce1"/><rect x="110" y="106.60" width="1035" height="1" fill="#d9dce1"/><rect x="110" y="59.80" width="1035" height="1" fill="#d9dce1"/><rect x="173.80" y="275.58" width="19.90" height="18.72" fill="#37444a"/><rect x="193.70" y="210.06" width="19.90" height="84.24" fill="#f25f5b"/><rect x="227.77" y="289.62" width="19.90" height="4.68" fill="#3bb8a8"/><rect x="247.67" y="224.10" width="19.90" height="70.20" fill="#37444a"/><rect x="267.57" y="121.14" width="19.90" height="173.16" fill="#f25f5b"/><rect x="301.64" y="284.94" width="19.90" height="9.36" fill="#3bb8a8"/><rect x="321.54" y="261.54" width="19.90" height="32.76" fill="#37444a"/><rect x="341.44" y="205.38" width="19.90" height="88.92" fill="#f25f5b"/><rect x="375.51" y="289.62" width="19.90" height="4.68" fill="#3bb8a8"/><rect x="395.41" y="238.14" width="19.90" height="56.16" fill="#37444a"/><rect x="415.31" y="153.90" width="19.90" height="140.40" fill="#f25f5b"/><rect x="469.28" y="214.74" width="19.90" height="79.56" fill="#37444a"/><rect x="489.18" y="111.78" width="19.90" height="182.52" fill="#f25f5b"/><rect x="543.15" y="205.38" width="19.90" height="88.92" fill="#37444a"/><rect x="563.05" y="102.42" width="19.90" height="191.88" fill="#f25f5b"/><rect x="617.02" y="242.82" width="19.90" height="51.48" fill="#37444a"/><rect x="636.92" y="116.46" width="19.90" height="177.84" fill="#f25f5b"/><rect x="670.99" y="289.62" width="19.90" height="4.68" fill="#3bb8a8"/><rect x="690.89" y="224.10" width="19.90" height="70.20" fill="#37444a"/><rect x="710.79" y="135.18" width="19.90" height="159.12" fill="#f25f5b"/><rect x="764.76" y="238.14" width="19.90" height="56.16" fill="#37444a"/><rect x="784.66" y="102.42" width="19.90" height="191.88" fill="#f25f5b"/><rect x="838.63" y="233.46" width="19.90" height="60.84" fill="#37444a"/><rect x="858.53" y="125.82" width="19.90" height="168.48" fill="#f25f5b"/><rect x="912.50" y="256.86" width="19.90" height="37.44" fill="#37444a"/><rect x="932.40" y="172.62" width="19.90" height="121.68" fill="#f25f5b"/><rect x="986.37" y="238.14" width="19.90" height="56.16" fill="#37444a"/><rect x="1006.27" y="125.82" width="19.90" height="168.48" fill="#f25f5b"/><rect x="1060.24" y="256.86" width="19.90" height="37.44" fill="#37444a"/><rect x="1080.14" y="181.98" width="19.90" height="112.32" fill="#f25f5b"/></svg><div style="position:absolute;left:140px;top:785.5px;width:34.5px;height:16px;line-height:16px;font-size:12px;color:#5a5e69;text-align:right;font-weight:normal;white-space:nowrap;"><span style="display:inline-block;transform:scaleX(0.95);transform-origin:100% 50%;white-space:nowrap">10</span></div><div style="position:absolute;left:140px;top:738.6999999999999px;width:34.5px;height:16px;line-height:16px;font-size:12px;color:#5a5e69;text-align:right;font-weight:normal;white-space:nowrap;"><span style="display:inline-block;transform:scaleX(0.95);transform-origin:100% 50%;white-space:nowrap">20</span></div><div style="position:absolute;left:140px;top:691.9px;width:34.5px;height:16px;line-height:16px;font-size:12px;color:#5a5e69;text-align:right;font-weight:normal;white-space:nowrap;"><span style="display:inline-block;transform:scaleX(0.95);transform-origin:100% 50%;white-space:nowrap">30</span></div><div style="position:absolute;left:140px;top:645.0999999999999px;width:34.5px;height:16px;line-height:16px;font-size:12px;color:#5a5e69;text-align:right;font-weight:normal;white-space:nowrap;"><span style="display:inline-block;transform:scaleX(0.95);transform-origin:100% 50%;white-space:nowrap">40</span></div><div style="position:absolute;left:140px;top:598.3px;width:34.5px;height:16px;line-height:16px;font-size:12px;color:#5a5e69;text-align:right;font-weight:normal;white-space:nowrap;"><span style="display:inline-block;transform:scaleX(0.95);transform-origin:100% 50%;white-space:nowrap">50</span></div><div style="position:absolute;left:214.5px;top:864.7px;width:80px;height:16px;line-height:16px;font-size:13px;color:#5f636d;text-align:center;white-space:nowrap;transform-origin:50% 50%;transform:rotate(-54deg)">2017-10</div><div style="position:absolute;left:288.4px;top:864.7px;width:80px;height:16px;line-height:16px;font-size:13px;color:#5f636d;text-align:center;white-space:nowrap;transform-origin:50% 50%;transform:rotate(-54deg)">2017-11</div><div style="position:absolute;left:362.2px;top:864.7px;width:80px;height:16px;line-height:16px;font-size:13px;color:#5f636d;text-align:center;white-space:nowrap;transform-origin:50% 50%;transform:rotate(-54deg)">2017-12</div><div style="position:absolute;left:436.1px;top:864.7px;width:80px;height:16px;line-height:16px;font-size:13px;color:#5f636d;text-align:center;white-space:nowrap;transform-origin:50% 50%;transform:rotate(-54deg)">2018-01</div><div style="position:absolute;left:510.0px;top:864.7px;width:80px;height:16px;line-height:16px;font-size:13px;color:#5f636d;text-align:center;white-space:nowrap;transform-origin:50% 50%;transform:rotate(-54deg)">2018-02</div><div style="position:absolute;left:583.9px;top:864.7px;width:80px;height:16px;line-height:16px;font-size:13px;color:#5f636d;text-align:center;white-space:nowrap;transform-origin:50% 50%;transform:rotate(-54deg)">2018-03</div><div style="position:absolute;left:657.7px;top:864.7px;width:80px;height:16px;line-height:16px;font-size:13px;color:#5f636d;text-align:center;white-space:nowrap;transform-origin:50% 50%;transform:rotate(-54deg)">2018-04</div><div style="position:absolute;left:731.6px;top:864.7px;width:80px;height:16px;line-height:16px;font-size:13px;color:#5f636d;text-align:center;white-space:nowrap;transform-origin:50% 50%;transform:rotate(-54deg)">2018-05</div><div style="position:absolute;left:805.5px;top:864.7px;width:80px;height:16px;line-height:16px;font-size:13px;color:#5f636d;text-align:center;white-space:nowrap;transform-origin:50% 50%;transform:rotate(-54deg)">2018-06</div><div style="position:absolute;left:879.3px;top:864.7px;width:80px;height:16px;line-height:16px;font-size:13px;color:#5f636d;text-align:center;white-space:nowrap;transform-origin:50% 50%;transform:rotate(-54deg)">2018-07</div><div style="position:absolute;left:953.2px;top:864.7px;width:80px;height:16px;line-height:16px;font-size:13px;color:#5f636d;text-align:center;white-space:nowrap;transform-origin:50% 50%;transform:rotate(-54deg)">2018-08</div><div style="position:absolute;left:1027.1px;top:864.7px;width:80px;height:16px;line-height:16px;font-size:13px;color:#5f636d;text-align:center;white-space:nowrap;transform-origin:50% 50%;transform:rotate(-54deg)">2018-09</div><div style="position:absolute;left:1100.9px;top:864.7px;width:80px;height:16px;line-height:16px;font-size:13px;color:#5f636d;text-align:center;white-space:nowrap;transform-origin:50% 50%;transform:rotate(-54deg)">2018-10</div><div style="position:absolute;left:1275px;top:602px;width:26px;height:14px;background:#3bb8a8"></div><div style="position:absolute;left:1306px;top:600px;width:80px;height:17px;line-height:17px;font-size:13px;color:#3a3a3a;text-align:left;font-weight:normal;white-space:nowrap;"><span style="display:inline-block;transform:scaleX(0.9);transform-origin:0% 50%;white-space:nowrap">AVIVA</span></div><div style="position:absolute;left:1275px;top:622px;width:26px;height:14px;background:#37444a"></div><div style="position:absolute;left:1306px;top:620px;width:80px;height:17px;line-height:17px;font-size:13px;color:#3a3a3a;text-align:left;font-weight:normal;white-space:nowrap;"><span style="display:inline-block;transform:scaleX(0.9);transform-origin:0% 50%;white-space:nowrap">HESTIA</span></div><div style="position:absolute;left:1275px;top:642px;width:26px;height:14px;background:#f25f5b"></div><div style="position:absolute;left:1306px;top:640px;width:80px;height:17px;line-height:17px;font-size:13px;color:#3a3a3a;text-align:left;font-weight:normal;white-space:nowrap;"><span style="display:inline-block;transform:scaleX(0.9);transform-origin:0% 50%;white-space:nowrap">PZU</span></div><div style="position:absolute;left:1416px;top:546px;width:439px;height:370px;background:#e5e8f0;border:1px solid #c9c9cc;box-sizing:border-box;box-shadow:1px 1px 1px rgba(0,0,0,0.08)"></div><svg style="position:absolute;left:1416px;top:546px;" width="439" height="370" viewBox="0 0 439 370"><path d="M219.10 185.00 L383.40 185.00 A164.3 164.3 0 0 1 383.15 194.08 Z" fill="#3bb8a8"/><path d="M219.10 185.00 L383.15 194.08 A164.3 164.3 0 0 1 195.23 347.56 Z" fill="#37444a"/><path d="M219.10 185.00 L195.23 347.56 A164.3 164.3 0 1 1 383.40 185.00 Z" fill="#f25f5b"/></svg><div style="position:absolute;left:1553px;top:658px;width:56px;height:20px;background:#fff"></div><div style="position:absolute;left:1553px;top:659px;width:56px;height:20px;line-height:20px;font-size:12px;color:#333;text-align:center;font-weight:normal;white-space:nowrap;">72.68 %</div><div style="position:absolute;left:1692px;top:723px;width:50px;height:19px;background:#fff"></div><div style="position:absolute;left:1692px;top:724px;width:50px;height:19px;line-height:19px;font-size:12px;color:#333;text-align:center;font-weight:normal;white-space:nowrap;">0.88 %</div><div style="position:absolute;left:1659px;top:783px;width:56px;height:20px;background:#fff"></div><div style="position:absolute;left:1659px;top:784px;width:56px;height:20px;line-height:20px;font-size:12px;color:#333;text-align:center;font-weight:normal;white-space:nowrap;">26.44 %</div>
</body></html>
